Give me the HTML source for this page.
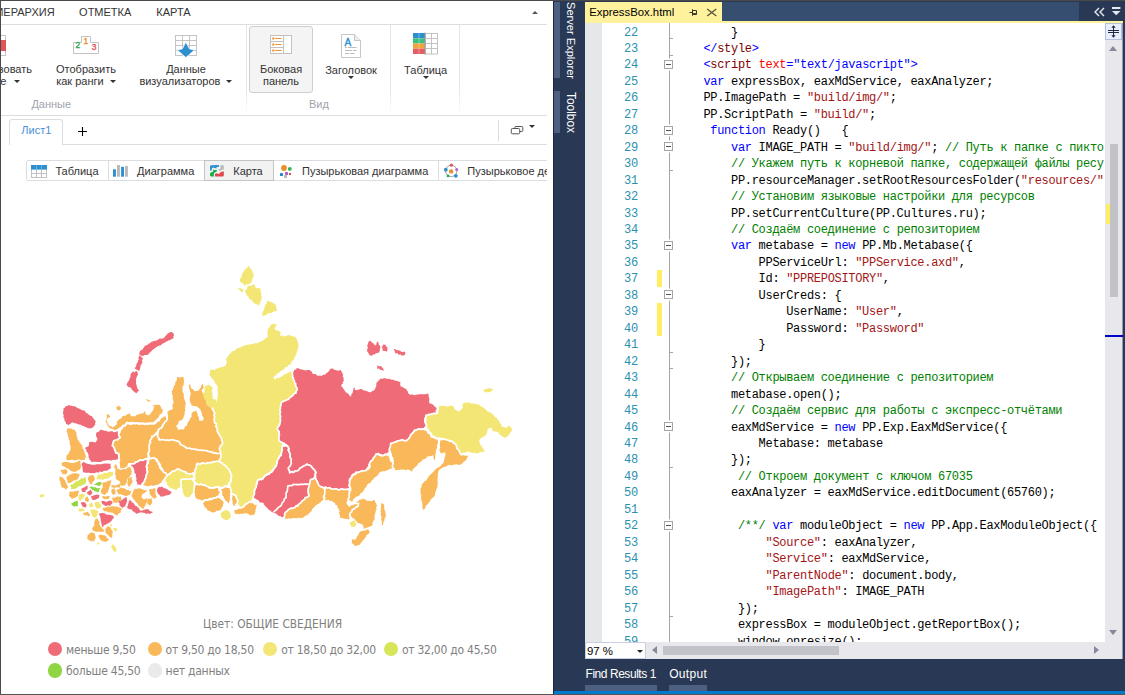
<!DOCTYPE html>
<html lang="ru"><head><meta charset="utf-8"><title>ExpressBox</title><style>
*{box-sizing:border-box;margin:0;padding:0}
html,body{width:1125px;height:695px;overflow:hidden;background:#fff}
body{position:relative;font-family:"Liberation Sans",sans-serif;font-size:11px;color:#333}
.abs{position:absolute}
#left{position:absolute;left:0;top:0;width:553px;height:695px;background:#fff;overflow:hidden}
#lb{position:absolute;left:0;top:0;width:1px;height:695px;background:#4a4a4a}
#topb{position:absolute;left:0;top:0;width:1125px;height:1px;background:#4a4a4a;z-index:20}
#botb{position:absolute;left:0;top:694px;width:1125px;height:1px;background:#555;z-index:20}
#clip{position:absolute;left:1px;top:1px;width:546px;height:692px;overflow:hidden}
.t{position:absolute;white-space:nowrap;line-height:12px;color:#333}
.hl{position:absolute;height:1px;background:#dcdde0}
.vsep{position:absolute;width:1px;top:24px;height:90px;background:linear-gradient(#e4e4e6 0%,#e4e4e6 70%,#fff 100%)}
.arr{position:absolute;width:0;height:0;border-left:3px solid transparent;border-right:3px solid transparent;border-top:3px solid #333}
.grp{color:#a0a3ad}
/* VS */
#vs{position:absolute;left:553px;top:0;width:572px;height:695px;background:#293955;overflow:hidden}
.vt{position:absolute;white-space:nowrap;color:#fff;font-size:11.2px;line-height:14px}
#ed{position:absolute;left:32px;top:23px;width:520px;height:619px;background:#fff;overflow:hidden}
.ln{position:absolute;left:0;width:52.8px;text-align:right;color:#2b91af}
pre,.ln{font-family:"Liberation Mono",monospace;font-size:12px;letter-spacing:-0.3px;line-height:16.46px;height:16.46px}
pre{position:absolute;left:118.4px;color:#000;white-space:pre}
.k{color:#0000ff}.s{color:#a31515}.c{color:#008000}.a{color:#ff0000}.m{color:#800000}
.cb{position:absolute;left:79px;width:9px;height:9px;border:1px solid #a5a5a5;background:#fff;box-shadow:0 -1.5px 0 #fff,0 1.5px 0 #fff}
.cb:after{content:"";position:absolute;left:1px;top:3px;width:5px;height:1px;background:#555}
.tick{position:absolute;left:85px;width:3px;height:1px;background:#a5a5a5}
.ym{position:absolute;left:72px;width:5px;background:#ffee62}
.lg{position:absolute;white-space:nowrap;font-family:"DejaVu Sans Condensed","DejaVu Sans",sans-serif;font-size:12px;letter-spacing:-0.25px;color:#808080;line-height:14px}
.dot{position:absolute;width:14.4px;height:14.4px;border-radius:50%}
</style></head><body>
<div id="left"><div id="clip" style="left:0;top:0;width:547px;height:695px">
<!-- ribbon tabs -->
<div class="t" style="left:-4.6px;top:6px">ИЕРАРХИЯ</div>
<div class="t" style="left:79.1px;top:6px">ОТМЕТКА</div>
<div class="t" style="left:156.3px;top:6px">КАРТА</div>
<div class="arr" style="left:532px;top:11px;border-top:none;border-bottom:3px solid #555"></div>
<div class="hl" style="left:0;top:24px;width:547px"></div>
<!-- group 1 : Данные -->
<svg class="abs" style="left:0;top:34px" width="8" height="24" viewBox="0 0 8 24"><rect x="-3.5" y="1.5" width="9" height="20" fill="#fff" stroke="#c6c6c6"/><rect x="-3" y="6" width="9" height="11" fill="#e35256"/></svg>
<div class="t" style="right:515px;top:63.4px">Преобразовать</div><div class="t" style="right:540.5px;top:75.4px">данные</div>
<div class="arr" style="left:13.5px;top:80px"></div>
<svg class="abs" style="left:72px;top:35px" width="28" height="20" viewBox="0 0 28 20"><path d="M1.5 18.5V7.5H9.5V1.5H18.5V7.5H26.5V18.5Z" fill="#fff" stroke="#c2c2c2"/><text x="3.5" y="13" font-family="Liberation Sans,sans-serif" font-size="8.4" fill="#2fa84f" stroke="#2fa84f" stroke-width="0.35">2</text><text x="11.4" y="9" font-family="Liberation Sans,sans-serif" font-size="8.4" fill="#e8902a" stroke="#e8902a" stroke-width="0.35">1</text><text x="19.8" y="15" font-family="Liberation Sans,sans-serif" font-size="8.4" fill="#e2545a" stroke="#e2545a" stroke-width="0.35">3</text></svg>
<div class="t" style="left:26px;top:63.4px;width:120px;text-align:center;line-height:12px">Отобразить<br>как ранги&nbsp;&nbsp;&nbsp;&nbsp;</div>
<div class="arr" style="left:109.5px;top:80px"></div>
<svg class="abs" style="left:174px;top:34px" width="24" height="25" viewBox="0 0 24 25"><g fill="none" stroke="#c4c4c4"><rect x="1.5" y="1.5" width="21" height="20"/><path d="M8.5 1.5V21.5M15.5 1.5V21.5M1.5 6.5H22.5M1.5 11.5H22.5M1.5 16.5H22.5"/></g><path d="M11.9 8L15.4 14.8L20.6 16L11.9 23.6L3.2 16L8.4 14.8Z" fill="#2b8fd0" stroke="#fff" stroke-width="0.8"/></svg>
<div class="t" style="left:126px;top:63.4px;width:120px;text-align:center;line-height:12px">Данные<br>визуализаторов&nbsp;&nbsp;&nbsp;&nbsp;</div>
<div class="arr" style="left:226px;top:80px"></div>
<div class="t grp" style="left:31.4px;top:98.4px">Данные</div>
<div class="vsep" style="left:246px"></div>
<!-- group 2 : Вид -->
<div class="abs" style="left:249px;top:26px;width:64px;height:67px;border:1px solid #cfcfcf;border-radius:3px;background:#f4f4f4"></div>
<svg class="abs" style="left:269px;top:34px" width="24" height="21" viewBox="0 0 24 21"><rect x="1.5" y="1.5" width="21" height="18" fill="#fff" stroke="#c2c2c2"/><path d="M14.5 1.5V19.5M1.5 7.5H14.5M1.5 13.5H14.5" stroke="#c2c2c2" fill="none"/><g fill="#e8902a"><rect x="3.3" y="3.5" width="2" height="2"/><rect x="6.2" y="4" width="6.3" height="1"/><rect x="3.3" y="9.5" width="2" height="2"/><rect x="6.2" y="10" width="6.3" height="1"/><rect x="3.3" y="15.5" width="2" height="2"/><rect x="6.2" y="16" width="6.3" height="1"/></g></svg>
<div class="t" style="left:221px;top:63.4px;width:120px;text-align:center;line-height:12px">Боковая<br>панель</div>
<svg class="abs" style="left:340px;top:33px" width="22" height="26" viewBox="0 0 22 26"><path d="M1.5 1.5H14.5L20.5 7.5V24.5H1.5Z" fill="#fff" stroke="#c6c6c6"/><path d="M14.5 1.5V7.5H20.5" fill="#eee" stroke="#c6c6c6"/><text x="4.6" y="12.8" font-family="Liberation Sans,sans-serif" font-size="10" fill="#2b8fd0" stroke="#2b8fd0" stroke-width="0.4">A</text><path d="M5 14.5H7M8 14.5H16.5M5 17.5H12M13 17.5H16.5M5 20.5H9M10 20.5H14.5" stroke="#bdbdbd"/></svg>
<div class="t" style="left:325.2px;top:64.4px">Заголовок</div>
<div class="arr" style="left:348px;top:76.4px"></div>
<div class="t grp" style="left:309px;top:98.4px">Вид</div>
<div class="vsep" style="left:390px"></div>
<!-- group 3 -->
<svg class="abs" style="left:412px;top:32px" width="27" height="23" viewBox="0 0 27 23"><rect x="13.5" y="1.5" width="12" height="20.5" fill="#fff" stroke="#c2c2c2"/><path d="M19.5 1.5V22M13.5 6.5H25.5M13.5 11.5H25.5M13.5 16.5H25.5" stroke="#c2c2c2" fill="none"/><rect x="1" y="1" width="12" height="5.3" fill="#2b8fd0"/><rect x="1" y="6.3" width="12" height="5.2" fill="#3fbf7f"/><rect x="1" y="11.5" width="12" height="5.2" fill="#f0a23c"/><rect x="1" y="16.7" width="12" height="5.3" fill="#e85d64"/><path d="M7 1V22" stroke="#fff" stroke-opacity=".35"/><path d="M13 0.5V22.5" stroke="#9a9a9a"/></svg>
<div class="t" style="left:404.1px;top:64.4px">Таблица</div>
<div class="arr" style="left:422.5px;top:76.4px"></div>
<div class="vsep" style="left:459px"></div>
<div class="hl" style="left:0;top:115px;width:547px"></div>
<!-- sheet tabs -->
<div class="hl" style="left:9px;top:144px;width:538px"></div>
<div class="abs" style="left:9px;top:119px;width:54px;height:26px;border:1px solid #dcdde0;border-bottom:none;border-radius:3px 3px 0 0;background:#fff"></div>
<div class="t" style="left:21.3px;top:124.2px;color:#4a8fd6">Лист1</div>
<svg class="abs" style="left:77px;top:126px" width="11" height="11" viewBox="0 0 11 11"><path d="M5.5 1V10M1 5.5H10" stroke="#000" stroke-width="1.1"/></svg>
<div class="abs" style="left:498px;top:120px;width:1px;height:21px;background:#dcdde0"></div>
<svg class="abs" style="left:510px;top:125px" width="14" height="10" viewBox="0 0 14 10"><rect x="4.8" y="1.5" width="8" height="5" rx="1" fill="#fff" stroke="#555"/><rect x="1.3" y="3.5" width="8.4" height="5.3" rx="1" fill="#fff" stroke="#555"/></svg>
<div class="arr" style="left:529px;top:125px"></div>
<!-- viz toolbar -->
<div class="abs" style="left:26px;top:160px;width:540px;height:21px;border:1px solid #dcdde0;border-radius:2px"></div>
<div class="abs" style="left:108px;top:161px;width:1px;height:19px;background:#dcdde0"></div>
<div class="abs" style="left:204px;top:160px;width:70px;height:21px;border:1px solid #c4c4c4;background:#f2f2f2"></div>
<div class="abs" style="left:438px;top:161px;width:1px;height:19px;background:#dcdde0"></div>
<svg class="abs" style="left:30px;top:164px" width="18" height="14" viewBox="0 0 18 14"><rect x="1.5" y="1.5" width="15" height="12" fill="#fff" stroke="#c2c2c2"/><path d="M1.5 9.5H16.5M6.5 5V13.5M11.5 5V13.5" stroke="#c2c2c2" fill="none"/><rect x="1" y="1" width="16" height="4.6" fill="#2b8fd0"/><path d="M6.5 1V5.6M11.5 1V5.6" stroke="#fff" stroke-opacity=".3"/></svg>
<div class="t" style="left:55.4px;top:165.2px">Таблица</div>
<svg class="abs" style="left:112px;top:164px" width="17" height="14" viewBox="0 0 17 14"><rect x="1" y="5.3" width="2.9" height="7.4" fill="#2b8fd0"/><rect x="5" y="1" width="2.9" height="11.7" fill="#b9b9b9"/><rect x="9.1" y="2.8" width="2.9" height="9.9" fill="#2b8fd0"/><rect x="13" y="2" width="2.9" height="10.7" fill="#b9b9b9"/></svg>
<div class="t" style="left:137.1px;top:165.2px">Диаграмма</div>
<svg class="abs" style="left:209px;top:164px" width="16" height="14" viewBox="0 0 16 14"><path d="M1 2.4Q1 1.2 2.2 1.2L9.9 1.1L10.2 2.8L7.7 3.1L7.5 4.5L5.4 4.1L4 3.6L2.9 4.5L2.75 6.4L1.2 6.8Z" fill="#2b8fd0"/><path d="M11.1 1.2H14.8V5.5L12.7 5.65L11.8 6.8L10.2 6.4L9.2 5.5L10.5 4.9L11.8 3.9L11.6 2.3Z" fill="#b9b9b9"/><path d="M4.5 5.2L5.4 6.1H7.7L8 7.2L6.7 7.9L5.4 8.7L4.8 10.2L5.1 12.5H2.3Q1.1 12.5 1 11.3V9.3L2.3 8.3L3.9 7.7L4.2 6.4Z" fill="#19b04b"/><path d="M14.8 7.4V11.6Q14.6 12.6 13.7 12.6H6.1L5.9 10.2L7 9.3L8.3 9.6L9.9 9.9L11.1 8.7L13 7.55Z" fill="#e2474c"/></svg>
<div class="t" style="left:233.3px;top:165.2px">Карта</div>
<svg class="abs" style="left:279px;top:164px" width="14" height="15" viewBox="0 0 14 15"><circle cx="5" cy="4" r="2.9" fill="#e8902a"/><circle cx="10.8" cy="4.9" r="1.9" fill="#33b15a"/><rect x="1" y="9" width="3" height="3" rx=".4" fill="#1e86d0"/><rect x="6" y="8" width="3" height="3" rx=".4" fill="#b05cc4"/><rect x="10" y="9" width="2" height="2" fill="#e2474c"/><rect x="5" y="11" width="3" height="3" rx=".4" fill="#b9b9b9"/></svg>
<div class="t" style="left:302px;top:165.2px">Пузырьковая диаграмма</div>
<svg class="abs" style="left:443px;top:163px" width="16" height="16" viewBox="0 0 16 16"><circle cx="8.2" cy="7.9" r="5.7" fill="none" stroke="#8c8c8c" stroke-width=".8"/><circle cx="8.4" cy="2.2" r="1.6" fill="#e5545b"/><circle cx="2.8" cy="6.7" r="1.9" fill="#2b8fd0"/><circle cx="13.7" cy="6.5" r="1.5" fill="#b75fc7"/><circle cx="5" cy="12.9" r="1.4" fill="#19b04b"/><circle cx="12.8" cy="12.8" r="1.9" fill="#2b8fd0"/><circle cx="8.1" cy="8.4" r="2.2" fill="#e8902a"/></svg>
<div class="t" style="left:467.3px;top:165.2px">Пузырьковое дерево</div>
<svg class="abs" style="left:0;top:240px" width="547" height="340" viewBox="0 240 547 340"><g stroke="#fff" stroke-width="1.70" stroke-linejoin="round">
<path fill="#f3e675" d="M273.3 322.4L272.6 323.1L271.5 323.4L270.5 324.3L269.4 325.5L269.3 326.0L269.0 326.4L268.1 327.6L267.1 328.3L267.2 329.9L266.4 331.2L266.2 331.7L266.4 332.5L266.7 334.2L266.8 335.4L266.9 336.8L266.0 337.0L265.6 337.2L264.7 337.9L263.5 338.8L262.1 340.1L261.9 339.7L260.6 340.4L259.9 340.8L258.8 341.4L257.6 342.4L256.6 342.0L256.1 342.1L253.9 342.4L253.1 343.3L252.6 343.5L251.4 342.9L250.2 343.6L248.8 343.7L247.9 343.9L247.0 343.8L246.2 344.2L244.6 344.3L243.7 345.1L242.4 344.9L241.5 345.6L240.9 346.6L240.2 346.6L239.8 346.6L238.5 347.2L237.0 347.4L236.0 348.2L235.4 348.5L234.7 349.0L234.2 350.2L232.7 350.1L231.8 350.7L231.0 351.5L230.1 352.6L229.4 353.0L228.6 353.6L228.1 354.5L227.2 355.7L227.3 356.0L226.7 356.8L225.8 357.5L225.3 358.3L225.3 360.0L225.9 361.5L225.7 362.9L225.3 363.7L225.0 365.0L224.1 365.3L223.1 366.0L222.1 366.2L221.0 366.0L219.8 366.9L219.3 366.8L218.2 367.2L216.8 367.8L215.5 368.3L214.6 368.8L214.3 368.6L212.5 369.0L211.4 368.8L210.3 368.9L209.4 369.4L209.0 371.2L209.2 372.4L209.3 372.8L208.9 373.6L208.1 374.7L208.7 375.7L209.7 376.3L210.3 377.4L210.4 378.8L211.8 379.5L213.0 380.3L212.9 381.1L213.7 381.6L214.3 383.0L214.6 384.3L215.3 384.7L216.1 385.4L216.4 386.2L216.9 387.1L216.8 389.0L216.7 390.0L216.8 390.7L216.9 392.3L216.9 393.4L217.0 393.9L216.9 395.3L216.8 396.8L216.6 397.7L216.5 398.9L215.9 399.7L216.1 400.7L215.5 402.0L214.8 403.1L214.7 403.6L214.5 404.5L213.8 406.2L212.7 407.2L213.0 407.6L212.6 409.3L213.0 410.1L213.1 411.0L213.1 412.2L213.0 413.1L212.3 413.8L212.9 414.9L213.4 415.9L213.3 417.0L213.0 418.3L213.0 419.4L213.6 419.9L214.0 420.8L213.8 422.3L214.8 423.8L215.7 424.8L215.6 425.7L215.1 426.8L215.8 427.1L215.4 428.0L215.8 429.3L216.5 430.3L216.6 431.3L216.8 431.7L217.0 432.5L218.0 433.9L218.9 434.9L219.2 436.1L219.2 437.3L220.2 438.1L220.7 439.6L220.6 440.2L221.4 440.9L221.5 442.9L221.4 443.7L220.8 444.9L220.1 445.7L219.6 446.8L218.8 448.0L219.2 449.2L219.1 449.4L220.1 451.1L220.3 452.5L219.8 453.2L219.6 454.2L220.2 455.7L220.1 457.3L220.0 457.8L219.6 458.4L219.3 459.6L218.1 461.1L218.3 462.2L218.8 463.0L219.1 464.3L219.4 465.4L219.6 466.8L220.8 467.4L221.6 467.6L222.4 467.9L223.4 468.3L224.0 469.2L225.6 469.2L226.6 470.3L227.3 471.5L227.9 472.1L227.8 473.2L228.9 473.5L229.8 474.0L229.4 475.4L229.3 477.1L230.6 478.3L229.9 478.6L231.2 479.8L230.7 481.2L230.4 482.1L229.7 483.1L229.4 484.0L229.7 484.6L229.6 485.5L229.7 487.1L230.0 488.4L230.0 488.8L230.5 489.8L231.2 490.9L231.3 491.9L231.6 493.6L232.9 494.1L234.3 495.3L235.3 495.9L235.5 496.3L235.6 497.1L235.7 498.4L235.5 499.6L235.8 501.0L236.6 502.4L237.3 503.3L237.2 504.7L237.8 504.5L238.1 505.8L238.8 506.6L239.8 507.5L239.8 508.0L240.5 508.3L241.2 507.7L242.6 507.7L243.6 506.7L244.5 505.9L244.9 505.1L245.7 504.4L246.8 504.1L247.5 503.4L248.3 503.0L249.1 502.4L249.9 501.7L251.3 500.9L252.2 500.3L252.8 499.0L253.7 498.6L253.3 497.3L253.4 496.3L253.9 495.4L254.7 494.1L254.9 492.8L254.0 491.6L254.7 490.7L255.2 489.9L255.2 489.0L255.5 488.4L256.6 487.0L256.6 486.1L256.3 485.1L257.3 483.6L257.1 482.3L257.5 481.1L258.0 479.8L258.6 479.6L258.9 479.7L260.2 478.9L261.3 479.2L262.2 479.0L262.7 478.2L264.0 476.6L264.5 475.9L265.4 475.3L266.7 474.5L267.0 474.1L268.5 473.7L269.4 472.8L270.8 472.2L271.7 472.0L271.8 470.9L272.7 470.6L273.0 469.8L273.4 468.9L274.5 467.9L274.7 467.2L275.4 466.5L276.3 465.5L276.4 464.2L276.9 463.4L276.9 462.4L277.1 461.4L277.6 460.1L278.1 458.7L278.3 458.2L278.7 457.7L279.7 455.8L280.8 455.4L281.0 454.4L281.2 453.3L282.1 452.4L281.8 451.5L282.5 450.5L282.5 449.0L282.7 448.0L283.1 447.0L283.5 445.8L283.1 444.7L282.8 444.1L283.2 443.1L282.6 442.3L281.3 441.5L280.2 441.0L279.9 439.9L280.0 438.6L280.0 437.4L280.0 436.1L280.8 434.8L280.7 433.6L280.2 432.8L278.9 432.6L279.0 431.0L279.1 430.3L278.7 429.4L278.4 428.2L278.8 427.0L280.2 426.2L280.5 425.1L281.0 424.7L281.1 423.7L280.6 422.6L281.5 421.7L281.5 420.2L281.8 419.6L282.0 418.0L282.4 416.9L282.9 416.2L282.4 415.4L281.3 413.6L281.4 412.7L281.5 412.0L281.2 410.8L280.8 409.7L280.6 409.2L281.3 408.1L281.6 407.1L281.7 405.7L282.5 405.1L282.5 403.3L283.9 403.0L284.7 402.1L286.1 402.1L286.3 401.6L287.6 400.6L288.6 400.4L289.5 400.2L290.0 399.3L291.1 398.1L291.5 398.1L292.8 397.6L293.7 396.4L294.5 395.4L295.1 394.5L295.8 393.7L296.2 393.5L296.6 392.5L296.9 391.8L297.9 390.9L298.5 390.5L298.4 389.0L298.4 388.3L297.5 387.3L296.8 385.9L296.8 384.5L296.0 384.5L295.7 383.7L295.4 382.3L295.7 380.5L295.4 379.2L294.4 378.8L294.5 378.0L293.9 377.2L293.6 375.4L293.3 375.1L293.5 374.3L293.6 373.0L293.6 371.8L293.5 370.6L293.4 369.9L292.5 370.5L291.0 370.7L289.5 370.8L288.9 371.4L287.2 371.9L286.5 372.8L285.9 373.1L284.8 373.1L283.8 373.9L282.4 375.0L281.5 375.2L281.2 376.1L279.5 375.9L279.1 377.0L278.3 377.4L277.3 377.0L275.8 377.4L274.8 378.6L274.4 377.4L275.2 376.3L276.4 376.4L277.1 375.5L277.6 374.5L279.0 373.7L279.6 373.3L280.6 372.5L281.3 371.8L282.5 371.0L283.4 370.6L284.3 370.3L284.9 369.4L285.7 367.9L286.6 367.8L287.6 367.7L288.5 366.7L288.5 366.0L289.5 365.6L290.5 365.5L291.3 364.7L292.2 363.1L292.1 362.7L292.9 361.3L294.0 360.7L294.9 359.6L295.0 358.6L295.4 357.6L296.3 355.9L296.8 355.6L297.0 354.4L297.5 352.9L297.8 352.2L298.1 351.3L298.3 350.2L298.5 349.3L299.1 347.9L299.4 347.1L299.4 346.1L299.1 345.0L299.1 343.9L299.4 342.9L299.0 342.5L297.9 340.5L298.6 339.6L297.2 338.3L296.8 337.7L296.3 336.9L295.5 336.3L294.0 335.6L293.0 335.3L292.0 335.3L290.9 334.9L290.1 334.0L289.2 334.0L288.2 334.4L286.7 334.6L285.5 335.1L284.6 335.5L284.0 335.7L283.5 334.9L282.3 334.4L280.9 335.0L281.2 334.1L281.6 332.4L281.1 331.6L281.1 330.2L280.2 330.6L279.2 330.2L279.0 330.0L277.4 329.7L276.3 329.5L275.4 328.1L276.5 327.3L276.6 326.8L277.1 325.8L277.8 324.3L276.9 323.7L275.6 323.5L274.7 323.3L274.4 322.5Z"/>
<path fill="#ef6b77" d="M292.8 370.1L293.1 370.5L292.7 371.6L292.2 372.6L292.5 374.2L292.6 375.3L292.5 376.1L292.7 377.4L293.5 377.9L293.3 379.4L293.8 380.1L294.4 380.6L294.5 381.9L294.9 383.5L295.9 384.0L295.4 384.9L295.5 385.6L296.1 386.5L296.9 388.0L297.0 388.9L297.4 389.3L296.5 390.8L295.9 391.8L296.0 393.1L294.9 393.2L293.7 393.9L293.6 394.4L292.9 395.5L291.4 396.4L290.8 397.0L290.3 397.3L289.2 398.2L288.8 398.9L287.7 399.7L286.3 400.0L285.4 400.6L285.0 400.8L284.0 401.1L282.8 401.8L281.3 402.5L281.0 403.8L281.1 405.3L280.6 405.7L280.3 407.0L280.5 408.5L280.0 409.7L279.9 410.5L280.3 411.1L280.5 412.1L280.1 413.2L279.8 413.4L280.3 415.6L280.8 416.4L280.4 416.8L280.2 418.3L280.4 419.5L280.5 420.6L280.3 421.6L280.1 422.7L279.8 424.1L279.5 424.9L279.0 426.1L278.0 426.7L277.5 428.0L277.2 428.8L278.0 430.1L278.2 431.0L279.2 431.5L279.0 433.2L279.1 433.8L279.5 434.6L279.1 435.9L279.0 437.1L278.9 438.3L279.0 439.5L278.9 440.0L279.9 441.2L280.0 441.5L281.3 442.1L282.6 442.6L283.3 443.1L284.6 443.5L284.9 444.6L286.0 444.8L286.6 445.1L287.7 446.3L288.3 446.9L288.8 448.8L288.3 449.8L288.6 450.7L289.3 451.9L289.1 452.7L290.1 453.5L290.1 454.9L289.9 455.9L289.9 457.0L290.5 458.2L291.0 458.9L291.4 459.7L290.9 460.2L291.0 461.7L290.8 462.9L290.4 463.7L290.4 464.9L289.5 465.8L288.7 466.8L288.2 467.8L288.1 468.7L289.0 470.1L289.6 471.2L289.7 471.6L289.6 473.1L290.6 472.6L292.3 471.7L292.8 472.5L294.1 472.1L294.7 471.5L295.3 470.9L296.8 470.8L298.2 470.6L298.5 470.2L299.4 469.4L299.8 468.4L300.6 468.0L301.9 467.2L303.1 466.5L303.9 465.9L304.9 465.8L306.4 465.2L306.8 464.2L307.4 464.9L309.0 465.2L310.0 465.5L311.4 466.4L311.8 467.6L312.3 468.0L313.3 469.0L314.2 469.7L314.9 470.8L315.2 471.7L315.9 472.3L315.0 474.4L315.7 475.8L315.0 476.8L315.3 478.0L315.3 478.1L315.7 479.4L316.0 480.8L316.5 481.5L316.9 482.4L317.4 483.6L318.0 484.4L318.4 485.5L319.8 486.4L320.9 486.9L321.7 487.6L322.3 487.1L323.9 488.0L325.1 488.0L325.9 488.4L326.8 488.6L328.0 488.8L329.2 489.4L330.3 489.5L331.2 489.7L332.2 490.1L333.0 490.3L333.8 490.4L334.4 490.0L336.0 489.9L337.0 490.2L338.1 490.5L339.2 490.5L340.0 490.0L340.8 489.4L342.5 489.3L342.6 490.1L344.0 490.0L345.1 490.2L346.2 490.2L346.9 489.8L348.2 489.5L349.5 488.5L350.0 486.9L350.0 486.3L350.5 485.1L350.4 484.2L350.3 482.8L350.1 481.5L349.6 480.9L349.5 479.8L350.3 478.5L351.2 477.9L351.4 476.9L351.7 476.0L352.4 474.9L353.5 474.1L354.5 473.8L355.8 473.0L355.8 472.4L356.4 472.3L357.5 472.5L358.7 472.3L359.7 472.3L361.4 471.7L362.0 471.1L362.9 471.1L364.0 471.0L365.3 470.7L366.4 470.3L366.7 469.6L367.3 468.5L367.8 467.7L368.7 466.6L369.3 465.8L369.0 464.7L369.7 463.7L370.4 462.6L371.1 461.4L371.8 460.9L373.1 459.2L373.4 458.4L374.4 457.5L375.2 456.5L376.1 455.3L376.3 454.6L376.9 454.1L378.5 453.6L378.8 454.0L379.7 454.6L381.1 454.8L381.9 455.1L382.7 456.0L384.4 455.0L384.9 454.3L386.0 454.5L387.4 454.1L387.6 453.4L388.5 453.3L389.8 452.1L389.5 451.4L390.0 450.4L390.1 449.5L390.3 448.4L391.2 447.2L390.8 446.9L391.7 445.7L392.4 444.6L392.7 443.6L393.4 443.6L394.9 442.6L395.6 442.5L396.6 441.8L397.4 441.0L398.2 441.2L399.9 440.6L400.8 440.3L402.2 440.2L402.8 440.2L404.5 440.9L405.2 441.1L405.8 440.7L406.8 440.3L408.0 440.4L409.0 439.6L409.4 438.8L409.5 437.8L410.7 436.9L411.1 435.7L411.4 434.7L412.3 433.9L412.5 432.9L413.3 432.5L414.1 431.1L414.2 430.3L415.5 430.4L416.7 429.7L417.9 429.3L419.1 429.0L420.8 429.4L421.4 429.7L422.6 428.8L423.8 429.5L424.6 429.4L424.6 427.7L425.5 427.4L426.0 426.3L426.6 424.5L425.7 423.5L425.2 422.8L424.9 422.1L424.8 421.2L425.0 419.5L425.0 418.5L425.5 417.8L425.9 416.5L426.5 415.9L427.1 415.8L428.1 415.1L429.0 414.9L430.1 414.5L431.5 414.3L432.5 413.9L433.7 413.8L433.9 413.4L435.4 414.0L436.8 413.5L436.6 412.2L436.3 410.9L436.9 410.1L437.5 408.8L437.4 407.3L437.3 407.5L435.9 406.3L435.0 405.7L434.6 404.9L433.5 404.2L432.9 403.5L432.2 403.1L430.8 402.6L430.0 402.4L430.0 400.6L430.2 399.2L430.1 398.2L429.5 396.7L429.7 395.5L429.3 395.0L429.2 394.0L429.0 392.6L427.0 392.7L426.1 393.2L425.3 393.3L423.9 393.3L422.6 393.5L421.8 393.4L421.1 393.0L420.6 393.2L418.7 393.7L417.6 393.6L417.1 393.5L415.9 393.9L414.1 394.3L412.8 393.8L412.0 393.0L411.6 393.3L410.6 393.9L409.4 393.3L408.9 392.5L408.7 391.2L407.3 389.7L407.2 389.1L406.8 388.2L405.6 387.7L404.4 387.4L403.6 386.6L402.5 386.1L401.4 385.8L401.0 384.3L401.3 383.3L401.1 382.3L402.0 381.9L401.4 380.9L399.5 381.0L398.2 380.5L397.2 380.0L396.0 380.0L395.2 379.7L394.5 379.2L393.5 378.7L392.1 378.9L391.0 378.7L390.4 377.8L388.9 378.0L388.3 378.2L387.2 378.0L386.1 377.4L385.1 377.4L383.9 377.1L382.5 377.9L382.1 377.7L381.3 377.9L380.4 377.8L379.4 378.2L378.6 379.5L377.8 380.0L377.5 380.5L376.5 381.7L375.4 382.2L375.6 383.4L375.4 384.4L375.5 385.4L375.3 386.5L374.5 387.4L374.3 388.8L373.5 389.6L372.1 390.2L371.4 390.4L371.3 390.9L370.1 391.5L368.9 391.2L368.0 390.9L367.8 390.5L365.9 389.9L364.7 389.8L363.7 389.5L362.8 388.9L362.4 388.4L361.2 387.8L360.5 388.1L359.6 388.4L358.0 388.9L356.7 389.3L355.7 389.1L355.3 387.1L354.3 386.5L353.4 385.9L353.5 386.5L353.5 387.2L352.6 388.1L352.4 389.9L352.2 390.7L351.9 392.0L351.7 392.8L350.7 393.3L350.4 393.9L350.5 395.5L349.9 394.4L348.9 393.3L348.4 393.0L347.6 392.1L346.4 391.6L346.0 390.8L345.3 390.1L343.9 388.1L343.7 387.8L343.2 386.6L342.1 385.8L342.5 384.7L343.9 384.2L343.6 382.9L343.7 382.3L344.3 381.4L344.9 380.4L344.3 379.4L344.6 378.2L344.1 376.9L343.6 376.0L343.9 375.1L344.2 374.2L343.3 373.3L343.1 372.2L342.5 371.4L342.0 370.9L341.3 369.3L340.2 368.9L339.4 369.2L338.6 369.8L336.5 369.3L335.7 369.1L334.8 369.1L333.9 368.2L333.1 367.6L332.2 367.7L331.1 367.8L330.1 367.6L329.1 369.1L328.9 369.8L327.5 371.4L327.0 371.8L326.3 372.1L325.5 372.8L324.8 373.7L323.9 374.0L322.7 373.9L321.3 375.1L320.5 374.5L319.6 374.5L318.7 375.0L317.5 374.8L316.6 373.8L315.6 373.1L314.1 373.2L313.5 373.2L312.8 372.3L312.2 370.7L311.3 370.4L310.2 369.2L309.7 369.1L308.7 369.1L307.7 369.0L306.0 369.6L305.0 369.1L304.6 369.5L303.6 369.1L302.3 368.7L300.6 368.3L299.4 368.0L298.9 367.8L297.8 367.1L297.0 367.3L296.0 367.7L295.3 369.0L294.2 368.7L293.5 369.3Z"/>
<path fill="#ef6b77" d="M282.8 445.1L282.1 446.0L282.2 447.0L282.1 448.5L282.3 450.3L281.7 451.2L281.8 452.1L281.5 453.1L280.9 453.8L281.3 455.4L280.5 455.7L279.4 456.8L278.9 458.1L278.5 458.6L278.2 459.2L277.2 460.7L277.3 462.0L277.2 462.7L276.8 463.9L276.5 464.9L276.3 466.2L274.9 467.1L275.0 467.8L274.0 468.9L273.3 469.7L273.0 470.7L272.0 471.1L271.8 472.1L271.0 472.2L269.9 472.9L269.3 474.1L267.4 474.3L267.1 474.8L266.1 475.4L264.7 476.0L264.4 476.8L263.4 477.9L262.7 479.1L261.8 479.6L260.6 479.2L259.3 479.8L258.6 479.8L258.0 480.1L257.5 481.2L257.1 482.3L257.4 483.5L256.2 484.9L256.4 486.0L256.4 486.8L255.6 488.1L255.1 489.1L255.1 489.6L254.8 490.5L253.8 491.4L254.6 492.6L254.5 493.9L253.9 495.2L253.4 496.2L253.2 497.1L253.6 498.7L254.9 499.2L255.3 499.9L255.9 500.0L257.0 500.6L258.2 501.1L258.6 502.7L259.9 503.3L261.1 503.4L261.7 503.3L262.9 503.8L262.8 504.8L264.0 505.7L264.5 506.6L265.0 507.1L266.0 508.2L267.1 509.0L267.9 510.2L269.0 510.9L269.5 511.1L270.0 511.3L270.6 512.2L271.9 513.0L272.9 513.2L273.5 513.4L275.0 514.4L276.3 514.6L276.7 515.1L277.5 516.4L278.7 516.6L279.9 517.3L280.5 517.1L281.4 517.8L282.4 518.6L283.3 518.4L283.9 518.0L284.5 516.9L285.0 515.4L284.9 514.5L284.9 513.7L286.2 512.9L286.5 512.3L287.4 511.5L288.1 510.4L288.9 509.5L290.3 509.5L291.1 508.8L292.1 508.8L293.3 508.5L294.2 508.2L294.6 508.2L296.0 506.5L296.7 506.1L298.1 506.1L298.4 505.0L299.7 504.1L301.0 503.2L301.5 502.1L302.2 502.0L302.7 501.3L304.0 500.4L304.7 499.6L305.6 498.6L305.4 497.6L306.8 497.6L308.2 497.1L309.1 496.2L309.2 495.3L309.0 494.0L309.3 493.2L308.5 491.5L308.7 490.5L308.9 490.3L309.3 489.4L309.7 487.9L309.3 486.8L310.0 486.8L310.5 485.0L310.6 483.7L311.0 482.8L311.5 481.8L311.7 481.0L312.5 480.1L313.7 479.4L314.2 478.8L314.4 478.2L314.4 477.5L314.7 476.5L315.4 475.4L314.9 474.1L316.0 472.2L315.3 471.7L314.9 470.9L314.4 469.9L313.4 469.1L312.5 468.2L311.9 467.5L311.6 466.6L310.1 465.5L309.0 465.1L307.4 464.7L306.9 463.9L306.3 464.8L305.2 465.4L304.2 465.7L303.4 465.9L302.8 466.7L301.7 467.3L300.4 468.0L299.7 468.4L299.3 469.5L298.4 470.2L298.1 470.6L296.8 470.8L295.3 470.9L294.7 471.4L294.1 472.1L292.8 472.3L292.1 471.6L290.5 472.5L289.6 472.8L289.5 471.5L289.3 470.8L288.6 469.5L288.2 468.3L288.9 467.3L289.7 466.3L290.5 465.5L290.7 464.4L291.3 463.4L291.1 462.6L291.0 460.8L291.2 459.9L291.2 459.2L290.7 458.4L290.0 457.5L289.8 456.0L290.1 455.1L290.1 453.7L289.3 452.8L289.2 452.0L288.8 450.9L288.0 449.9L288.8 449.2L288.3 447.0L287.6 446.5L286.4 445.9L285.6 445.5L284.0 446.3L283.6 445.6Z"/>
<path fill="#f9b95b" d="M309.0 486.2L308.8 487.1L308.4 488.3L307.9 489.6L308.0 490.4L308.0 490.5L308.0 491.5L308.6 493.6L308.2 493.9L309.1 495.5L308.7 496.3L307.4 497.2L306.2 497.5L305.3 497.6L305.3 498.4L304.4 499.5L303.4 500.1L302.1 501.0L301.7 501.7L301.1 502.0L300.9 502.8L299.1 503.9L298.1 504.8L298.1 505.9L296.6 505.7L295.8 506.1L295.0 507.7L294.1 507.7L293.4 507.9L292.1 508.4L290.9 508.2L289.8 508.8L288.9 509.3L287.8 510.3L287.0 511.2L286.2 511.8L285.7 512.1L285.0 513.1L284.5 514.1L284.8 515.1L284.5 516.3L284.1 517.7L283.2 518.1L284.3 519.2L285.2 519.4L286.6 519.6L288.0 519.6L288.9 519.2L289.7 519.2L290.8 519.9L292.0 519.4L292.3 519.2L294.0 518.9L295.4 519.1L296.1 519.0L296.6 519.0L297.5 519.3L298.7 518.6L300.4 519.1L301.5 519.0L302.3 518.4L302.9 518.7L303.6 518.5L304.6 517.7L305.2 516.7L306.1 516.3L307.9 516.0L308.1 515.2L309.2 514.5L309.9 513.9L310.0 513.5L311.1 512.3L312.3 511.9L312.7 511.4L312.6 509.8L313.6 508.8L314.6 508.1L315.4 507.3L315.6 506.5L316.6 506.0L317.5 505.6L317.9 505.1L319.1 504.4L320.9 503.0L321.6 502.7L322.1 501.5L323.3 501.0L323.8 500.5L324.8 499.0L325.0 497.8L324.4 497.6L324.6 496.5L324.7 495.4L324.6 494.5L324.8 493.3L325.2 492.1L324.7 490.3L324.8 490.2L325.1 488.5L324.3 488.4L322.5 487.3L321.8 487.2L320.9 486.6L320.3 486.4L319.0 485.4L318.3 484.3L318.0 483.1L317.7 482.4L317.2 481.5L316.6 480.5L316.1 479.4L315.7 478.2L315.7 478.1L314.2 478.1L313.8 478.6L312.0 479.2L311.0 479.3L310.6 479.7L310.1 480.9L310.0 482.0L309.9 483.1L309.4 483.9L309.5 484.3Z"/>
<path fill="#f9b95b" d="M325.3 486.9L325.3 488.0L324.8 489.8L324.7 490.3L324.9 491.5L324.9 492.8L324.7 493.9L324.5 494.9L323.8 496.0L323.5 497.4L324.5 497.4L324.8 498.4L324.2 499.8L323.8 500.9L325.3 501.0L326.3 501.1L327.5 500.8L328.3 500.7L328.7 501.3L329.9 502.0L331.3 501.6L332.4 502.7L333.3 503.1L334.2 503.3L334.8 505.0L335.1 505.7L336.5 505.8L336.8 507.6L337.2 508.4L337.8 509.3L338.3 510.4L338.7 511.3L338.3 512.0L338.1 512.8L338.5 514.1L339.1 515.3L339.1 516.4L338.9 517.5L340.3 519.2L340.8 518.7L341.4 518.8L342.8 519.3L343.5 519.3L344.7 519.5L346.4 520.0L347.3 519.6L348.1 520.1L348.6 520.9L350.1 521.0L349.7 520.0L350.6 518.2L350.3 517.3L350.4 515.9L350.4 515.1L351.4 514.3L352.3 513.0L352.5 512.2L352.7 511.6L352.9 510.4L353.6 509.4L354.8 509.1L355.1 508.6L356.8 507.6L356.9 507.8L357.6 506.7L359.0 505.7L359.1 504.8L359.8 504.2L360.8 503.3L360.6 501.9L359.3 501.0L358.6 500.0L358.3 499.1L357.4 499.8L356.0 500.8L355.2 501.6L354.6 501.9L354.1 502.6L353.7 503.4L353.0 504.3L351.7 504.3L350.5 504.7L349.9 505.4L349.6 505.9L348.6 505.2L348.5 504.6L347.6 503.7L347.5 502.4L348.1 501.1L348.4 500.2L349.6 499.2L349.4 498.2L349.8 496.7L350.3 495.7L350.4 494.7L350.2 493.9L349.8 493.1L349.2 491.5L349.2 490.8L349.0 490.0L348.6 489.0L347.3 489.2L346.3 489.3L345.3 489.4L344.1 489.3L342.7 489.3L342.6 488.9L340.6 488.9L340.1 489.7L339.0 490.0L337.8 489.4L336.5 488.9L335.1 488.9L333.8 489.2L332.8 489.2L331.7 488.8L331.1 489.0L330.3 487.9L328.9 487.7L328.2 488.0L327.4 488.1L326.3 487.6Z"/>
<path fill="#f9b95b" d="M350.6 478.5L350.2 479.9L349.8 480.9L349.5 481.6L349.5 482.4L349.7 483.6L348.8 485.5L349.5 485.9L350.0 486.6L350.5 488.1L350.7 489.5L350.6 490.1L349.9 491.0L349.6 492.5L349.4 493.6L348.9 494.8L349.2 496.1L349.3 497.2L348.4 498.4L348.4 499.8L347.8 500.0L349.1 501.2L350.1 501.3L351.3 502.3L352.4 502.7L353.0 502.3L353.6 501.5L353.7 500.1L354.4 499.5L355.4 498.5L356.7 497.7L357.0 497.2L357.7 497.2L359.0 497.2L359.8 496.1L360.6 495.0L360.9 494.2L361.5 494.1L362.4 493.0L363.6 492.2L363.8 491.7L364.2 491.4L365.2 490.0L365.2 489.1L366.0 488.7L366.7 487.4L367.6 486.9L367.8 485.3L368.7 484.3L369.9 484.2L370.9 483.7L371.6 482.5L372.4 481.3L372.9 480.5L373.5 480.7L374.3 479.8L374.4 478.7L375.3 478.1L376.6 477.2L377.2 476.8L378.2 476.0L379.0 475.1L379.4 474.3L379.9 473.0L381.1 472.9L381.9 472.3L382.9 472.1L383.9 472.0L385.5 472.3L386.1 471.4L387.4 471.1L388.6 470.8L389.4 470.1L389.9 469.7L391.2 469.5L392.3 469.2L392.9 468.7L393.4 467.4L393.8 465.9L394.2 464.4L393.1 463.5L392.8 462.6L392.5 462.2L391.0 460.8L390.4 459.7L390.4 458.5L390.3 457.6L389.7 456.8L389.3 455.9L388.5 455.1L388.0 454.2L387.5 454.1L387.1 455.0L385.4 454.4L384.7 454.9L383.4 455.6L381.8 456.0L381.1 455.1L380.0 455.6L379.1 455.0L378.3 454.2L377.3 454.0L375.8 454.1L375.8 455.1L374.8 456.2L374.3 457.1L373.3 458.0L373.1 458.9L372.4 460.2L371.2 460.7L370.9 461.4L369.8 462.7L369.5 463.9L369.5 465.0L370.2 466.2L369.6 467.1L368.8 468.8L367.7 468.9L366.5 469.5L366.5 470.2L365.4 470.7L364.1 470.9L362.9 470.9L362.0 470.6L361.4 471.1L359.8 471.7L358.8 472.1L357.9 472.5L356.8 472.3L356.0 472.7L356.2 473.4L355.3 474.4L354.4 474.5L353.2 475.0L352.5 475.7L352.0 476.8L351.4 477.8Z"/>
<path fill="#f9b95b" d="M352.1 503.3L353.3 503.5L353.9 503.3L354.7 503.4L356.0 503.3L357.0 503.4L357.7 503.3L358.5 503.4L358.4 504.6L358.3 505.6L356.8 507.2L356.9 507.0L355.7 507.4L354.5 508.6L354.0 509.0L352.3 509.6L352.0 510.7L351.6 512.0L350.3 512.9L349.9 513.6L349.8 513.9L349.8 514.5L349.8 515.2L350.5 516.6L351.1 517.8L352.1 518.8L353.1 518.9L353.5 519.9L354.7 520.2L354.7 521.3L355.9 521.7L356.4 523.0L357.4 523.6L358.8 524.1L359.4 524.3L360.4 524.7L361.4 524.8L362.3 525.8L362.6 527.0L363.0 528.4L364.0 530.0L365.0 529.6L365.7 529.2L367.0 528.6L368.4 528.3L369.9 527.4L370.4 527.0L371.2 527.0L372.7 526.5L373.1 525.1L373.8 524.9L373.3 523.3L373.7 522.1L374.6 520.8L375.3 519.8L375.6 519.0L375.3 517.5L375.5 517.0L375.3 515.7L375.9 514.8L376.0 513.8L376.2 513.0L376.5 512.1L376.5 511.0L377.4 510.3L377.5 508.9L376.9 507.7L377.4 506.9L377.8 506.2L377.6 505.0L377.1 503.4L376.9 503.1L376.1 502.0L375.5 500.5L375.7 499.2L373.8 498.9L372.5 499.8L371.7 500.2L370.7 500.2L369.6 500.2L368.9 499.8L367.7 500.0L367.0 499.9L366.0 498.7L365.1 498.7L364.0 498.0L363.0 497.7L362.3 497.8L361.8 498.5L360.3 498.8L359.2 499.0L358.5 499.8L357.8 500.3L356.3 501.1L355.1 501.6L354.5 501.9L354.0 502.3L353.3 502.5L352.1 502.9Z"/>
<path fill="#f9b95b" d="M390.6 443.6L390.6 444.6L390.5 445.5L390.3 446.9L389.7 448.2L389.3 449.1L389.2 450.2L389.5 451.1L390.2 451.5L390.6 453.0L391.1 454.3L391.3 455.6L391.0 456.8L392.0 457.3L392.6 458.2L392.7 459.1L392.6 459.8L393.1 460.7L392.8 462.3L392.8 462.5L393.1 463.7L392.7 465.0L392.4 466.0L392.5 467.4L393.6 468.5L394.2 468.9L394.1 470.1L394.5 471.1L395.6 471.2L396.3 470.9L397.4 470.8L398.6 470.9L399.6 470.8L400.5 470.3L401.8 470.6L403.4 470.3L404.6 470.6L406.1 471.1L407.7 470.1L408.1 470.4L409.5 470.9L410.2 471.4L411.3 472.5L412.3 473.0L412.9 471.5L413.2 471.0L413.4 470.3L414.1 469.1L414.8 468.8L415.6 467.9L416.7 466.7L417.9 466.2L418.2 465.1L418.7 464.1L419.4 463.7L420.2 463.5L420.9 462.4L422.2 462.0L423.0 460.8L423.5 460.0L424.4 459.9L425.6 459.8L426.6 458.8L427.3 457.8L427.8 457.3L429.5 457.1L430.3 457.0L431.5 456.8L432.6 456.2L432.4 457.4L432.7 458.0L433.0 458.8L432.5 459.8L433.1 460.1L434.6 460.8L436.0 461.6L435.5 460.5L436.1 459.3L435.9 458.5L435.9 457.5L436.2 456.6L436.1 455.7L436.3 454.2L436.6 452.4L436.7 451.3L437.5 450.7L437.1 450.7L437.1 449.5L437.7 448.4L438.0 447.3L437.7 445.9L438.4 444.7L438.4 443.7L438.8 442.5L439.4 441.7L438.9 441.2L438.4 439.9L438.5 439.3L437.2 438.7L435.8 438.6L435.0 438.0L434.2 437.6L433.8 437.0L432.0 437.1L430.9 436.2L430.7 435.0L430.6 434.3L429.6 433.1L428.3 433.1L427.8 432.2L427.8 431.3L426.6 430.2L425.3 429.9L425.1 429.2L424.4 429.4L423.5 429.3L422.4 428.9L421.2 429.6L420.6 429.3L418.9 428.9L417.7 429.5L416.7 429.8L415.7 430.4L414.6 430.6L414.3 431.0L413.4 432.4L412.5 432.9L412.0 433.8L411.1 434.5L410.3 435.2L410.2 436.9L409.2 437.8L408.6 438.5L408.0 439.4L407.3 440.3L406.1 440.4L405.3 441.0L404.6 440.9L402.8 440.0L402.1 440.0L400.8 440.3L400.1 440.5L398.8 440.9L397.7 441.0L397.0 441.1L396.3 441.9L394.8 442.2L393.5 442.5L393.1 442.9L391.8 443.1Z"/>
<path fill="#f3e675" d="M438.7 404.1L438.2 405.3L438.2 406.9L437.8 407.3L438.1 409.0L438.0 410.0L437.7 411.1L437.4 411.9L437.5 412.9L436.2 413.5L434.8 413.6L433.8 413.3L433.4 413.7L432.2 413.8L431.3 414.3L429.8 414.3L428.8 414.6L427.9 414.9L426.7 415.3L425.8 415.4L426.4 416.3L425.8 417.8L425.5 419.2L426.0 419.9L425.3 421.5L425.5 422.1L425.6 422.7L425.9 423.5L426.5 424.7L426.5 426.3L426.3 427.0L426.5 427.8L427.2 428.8L428.1 429.6L428.5 430.9L428.8 431.6L429.8 432.4L431.0 433.3L431.5 434.3L431.4 435.0L432.8 436.0L434.0 436.8L434.4 437.4L435.0 437.2L436.4 437.9L437.4 438.3L438.8 438.3L439.7 438.2L440.7 438.7L440.9 438.9L442.3 438.6L443.7 439.2L444.4 439.0L445.5 439.5L446.6 440.1L448.2 440.3L449.1 441.2L449.9 441.4L450.4 441.0L451.4 441.3L452.8 442.0L453.0 443.2L454.5 443.4L455.7 444.4L455.4 445.1L456.5 446.8L456.4 447.7L456.9 448.7L457.4 449.5L457.5 450.1L458.5 451.0L459.2 451.5L459.5 452.2L460.1 453.4L460.9 455.3L461.6 454.4L462.7 453.8L463.7 453.6L464.8 453.4L466.0 453.3L467.1 452.7L468.5 452.4L469.4 453.0L470.3 453.1L470.8 453.2L471.7 453.7L473.0 454.0L473.8 453.9L474.9 453.6L475.6 454.2L476.7 454.4L477.8 454.1L478.9 453.9L480.3 453.1L481.4 453.0L482.3 452.7L483.6 452.6L485.3 453.0L485.7 451.9L485.4 451.7L485.5 450.7L484.8 449.7L484.2 449.1L484.0 447.4L483.2 447.1L482.5 446.3L481.9 445.2L481.1 444.2L480.6 443.2L480.5 442.2L480.5 441.5L480.0 440.3L480.6 439.6L481.4 438.8L482.6 438.5L483.9 437.6L484.5 437.2L484.8 437.6L485.4 436.8L486.1 436.0L486.8 435.1L487.5 433.8L487.8 432.7L488.4 432.0L488.2 430.3L489.0 429.0L490.0 428.9L491.2 428.8L491.0 429.2L491.9 430.9L492.2 431.9L493.2 432.1L494.2 432.0L495.3 432.5L497.2 432.6L498.0 433.1L498.0 433.6L498.7 434.9L499.6 435.3L500.9 436.3L501.7 437.0L502.3 437.7L503.4 437.9L504.8 438.5L504.5 438.4L505.6 439.7L506.4 438.8L506.9 437.3L508.4 437.2L509.0 436.3L509.9 434.9L510.7 434.2L510.5 433.4L511.4 432.8L512.2 431.8L512.8 430.5L513.5 429.2L512.8 428.4L511.9 427.8L512.3 427.3L511.6 426.4L510.1 425.6L509.8 425.3L509.4 424.0L508.6 424.5L507.3 425.5L506.9 426.6L506.1 427.0L505.1 426.5L504.0 426.3L502.4 425.8L502.3 424.7L501.8 423.4L501.1 423.0L500.2 421.7L500.0 420.9L499.8 419.3L498.8 419.3L498.1 418.8L497.2 417.0L495.8 416.5L494.9 415.7L494.5 414.9L494.1 414.2L493.4 413.4L491.7 412.8L491.4 412.3L490.5 411.2L489.6 411.3L488.3 411.0L487.5 409.8L486.7 409.2L485.6 408.5L485.3 407.7L484.6 407.3L483.2 406.4L482.4 406.3L482.2 405.9L481.4 405.5L480.4 404.8L478.9 403.8L478.2 403.5L477.6 403.4L476.0 403.4L475.0 402.4L473.5 402.6L473.2 402.7L472.0 402.6L470.5 402.4L469.4 401.8L468.6 401.5L467.9 401.3L466.1 402.3L465.6 401.4L464.6 401.5L463.2 402.4L462.4 402.3L461.2 402.2L461.8 403.5L462.0 404.5L461.3 406.3L461.7 406.3L462.0 407.7L460.3 408.8L459.8 409.7L458.9 410.7L457.5 409.8L456.1 409.3L455.1 408.4L455.0 407.3L454.3 406.4L453.4 405.0L452.6 404.9L451.8 405.0L450.5 404.4L449.7 404.9L449.1 405.0L448.4 405.6L447.0 405.8L446.0 405.4L445.5 404.9L444.0 405.2L443.0 404.6L441.5 404.9L440.5 405.2L439.4 404.9Z"/>
<path fill="#f9b95b" d="M439.1 439.0L439.0 440.6L439.4 441.6L439.1 442.3L439.0 443.3L439.1 444.2L438.9 445.2L439.2 446.4L439.4 447.5L439.0 448.8L438.3 450.8L438.9 451.2L439.3 452.1L440.0 453.9L439.7 454.6L440.8 454.2L441.9 454.0L442.8 453.8L444.4 453.2L444.7 454.3L444.3 456.2L443.3 457.5L443.8 457.9L443.5 459.5L442.7 460.9L442.8 461.7L442.5 462.8L441.2 463.2L440.6 464.8L439.8 465.4L439.0 466.1L437.9 466.8L436.4 467.0L435.5 468.5L434.3 468.3L433.9 469.4L433.7 470.6L432.4 471.4L431.9 471.8L431.7 472.4L430.3 473.7L429.3 474.3L428.6 475.2L427.8 476.3L427.5 476.7L426.9 477.8L426.0 479.4L425.6 479.7L424.2 480.5L423.4 481.2L422.6 482.3L422.0 482.9L421.2 483.7L420.5 485.3L421.0 486.1L420.4 486.9L419.8 487.7L419.8 488.7L419.6 489.9L419.6 491.3L419.8 491.9L419.5 493.4L419.9 494.5L420.4 495.4L420.3 496.4L420.1 497.5L420.2 498.3L419.7 498.9L420.6 499.8L420.7 500.5L420.8 501.4L421.3 502.8L421.7 504.5L421.6 505.7L421.4 506.4L421.5 506.9L421.7 508.0L421.8 509.6L422.6 510.6L422.4 511.3L422.1 512.0L422.4 512.0L422.8 510.8L424.0 510.4L424.8 510.0L425.9 508.5L426.4 508.0L426.4 506.8L427.0 505.7L427.6 505.7L428.6 504.7L429.2 503.5L429.3 503.1L430.4 502.2L430.8 501.5L431.7 499.8L432.2 499.2L433.1 498.5L433.7 498.2L434.6 497.1L435.5 496.1L435.7 495.1L436.1 494.6L435.8 493.2L436.4 492.6L436.7 491.6L437.0 490.0L437.6 488.5L438.3 487.7L438.1 487.1L438.5 485.8L438.2 485.6L438.6 484.2L438.7 483.0L438.5 482.2L438.5 480.9L438.5 479.5L438.2 478.5L438.5 477.4L438.8 476.2L438.6 475.3L438.7 473.8L439.5 471.9L439.4 470.8L439.5 470.5L441.2 469.7L442.4 468.7L442.4 469.2L443.0 468.7L444.2 467.6L445.5 467.6L446.5 467.2L447.4 466.6L448.0 466.0L449.2 465.7L450.5 466.1L450.5 466.2L451.7 466.2L453.1 465.9L454.0 465.4L454.9 465.2L456.2 465.8L456.7 465.1L458.2 465.6L459.2 465.8L459.8 465.8L460.9 465.4L461.6 464.8L462.5 464.3L463.6 463.1L464.4 462.3L465.1 462.0L465.9 461.4L466.1 460.8L466.9 460.0L467.7 458.7L468.8 457.1L468.5 456.5L468.9 455.0L469.6 454.1L469.6 454.1L468.8 454.0L467.8 454.7L466.0 454.8L465.1 454.8L464.5 454.6L463.6 454.3L462.3 454.5L461.2 454.8L460.2 453.2L459.7 452.0L459.6 451.6L459.1 450.6L458.1 449.5L457.6 448.8L456.8 448.2L456.7 446.8L456.3 445.7L455.9 444.8L455.3 443.7L453.6 443.2L453.1 442.2L452.2 441.7L450.7 440.6L450.2 441.3L449.4 441.2L448.4 440.4L446.9 440.0L445.8 439.6L444.6 439.0L443.8 439.5L442.2 438.8L441.1 439.8L440.5 439.3Z"/>
<path fill="#f9b95b" d="M360.0 530.9L358.2 532.2L358.3 532.5L357.9 533.7L357.1 535.0L356.0 535.8L356.2 536.7L355.5 537.7L355.0 539.0L353.7 538.7L352.3 538.3L351.1 539.1L351.0 540.5L350.8 540.7L351.1 541.8L350.8 543.1L351.6 544.0L352.3 544.3L353.2 545.0L354.3 546.9L355.5 546.9L356.2 546.7L357.3 546.2L358.6 546.1L360.0 545.6L360.4 545.0L361.5 543.5L362.1 543.0L362.7 542.4L363.6 540.7L364.4 540.3L365.3 539.6L365.2 538.8L366.3 537.8L366.9 537.4L366.9 536.0L368.4 535.1L368.9 534.7L369.5 533.8L369.8 533.4L371.0 532.5L370.0 530.9L369.3 529.8L369.6 528.0L368.3 528.5L367.0 528.5L365.7 529.3L365.1 529.7L364.1 530.0L363.1 530.0L361.6 530.2L360.7 530.4Z"/>
<path fill="#f9b95b" d="M176.4 375.8L176.1 377.3L176.0 377.8L176.1 379.3L175.8 380.3L175.1 380.9L174.6 381.8L174.3 383.2L174.4 384.3L173.7 384.6L173.4 385.5L172.8 387.2L171.8 387.5L172.4 389.0L171.3 390.1L170.5 390.9L171.1 392.2L171.1 393.1L170.8 393.7L171.5 394.7L172.2 396.7L171.9 397.0L171.6 398.2L171.9 400.2L172.4 400.0L172.3 401.5L172.8 402.7L171.9 403.6L171.6 404.7L171.6 405.9L171.9 407.3L171.7 409.0L170.4 409.0L169.1 409.3L168.7 410.1L167.8 410.6L166.5 410.8L166.5 411.9L166.6 413.3L166.9 414.1L167.2 415.4L167.3 416.2L167.1 417.2L166.6 417.9L166.1 419.0L166.0 419.4L165.4 420.3L164.7 421.1L164.1 422.4L164.1 423.3L162.7 424.6L162.7 425.9L162.5 426.4L161.7 427.6L160.4 427.8L159.7 428.5L158.6 429.5L157.7 430.3L158.5 431.3L157.8 432.6L157.8 433.4L157.6 434.8L157.3 436.2L157.5 437.1L158.4 437.9L158.5 439.2L158.8 440.2L159.1 440.4L159.2 441.1L160.8 441.8L162.1 441.1L162.6 441.0L163.9 440.9L164.9 440.8L165.6 440.7L166.8 440.6L168.4 440.5L169.5 441.1L170.3 440.7L171.3 440.0L173.0 440.3L174.4 441.0L175.3 441.4L177.1 441.7L178.2 442.1L178.7 442.6L179.0 443.5L179.5 444.5L180.6 444.8L181.4 445.7L182.5 445.9L184.0 446.9L184.5 446.9L185.9 448.3L186.7 449.0L187.9 449.1L189.3 448.9L190.4 448.7L191.3 449.3L192.2 449.5L193.0 449.7L194.2 449.4L195.4 449.6L196.2 450.2L196.8 450.2L198.4 450.4L199.1 450.7L199.9 450.8L201.2 450.8L202.4 450.8L203.0 451.1L203.4 450.9L204.4 451.0L206.2 451.1L207.2 451.4L207.6 451.5L208.9 452.0L209.5 452.4L210.4 452.2L211.8 452.5L212.7 453.6L213.8 453.9L215.1 453.0L215.9 453.6L216.8 453.6L217.8 453.9L219.1 453.6L220.0 453.6L220.6 452.1L220.4 451.3L219.8 450.1L219.6 449.3L219.3 448.5L220.2 447.1L220.2 445.8L221.0 445.8L221.6 444.9L222.4 444.2L222.4 443.6L222.5 441.9L221.9 440.9L221.6 440.0L221.7 438.7L220.9 437.3L220.0 436.3L219.9 436.0L219.1 434.6L218.5 433.3L217.9 432.5L217.5 431.9L217.1 431.2L217.6 430.0L216.9 428.6L216.6 427.7L216.6 427.1L215.7 426.5L216.5 424.9L216.3 423.8L215.2 423.3L214.4 422.3L214.3 421.1L214.6 420.2L213.9 419.4L214.4 417.6L214.8 416.6L214.5 416.1L214.0 415.5L214.1 414.6L214.8 412.7L213.9 411.6L213.4 410.9L213.0 410.2L212.5 409.0L212.0 408.1L211.6 407.3L210.8 406.6L210.1 405.5L209.1 405.4L208.4 405.2L208.1 404.1L207.5 403.2L207.6 401.8L207.3 400.1L206.5 399.7L206.3 398.6L206.5 397.6L206.3 396.6L205.6 396.1L205.5 394.7L205.0 393.6L203.5 392.8L203.2 391.7L202.4 390.4L203.1 389.9L203.8 389.6L204.1 388.4L204.6 387.2L204.3 386.1L203.9 385.0L204.4 384.0L203.3 382.6L202.8 381.5L202.5 381.3L202.6 382.4L201.6 383.9L200.9 384.8L200.2 386.0L200.0 386.8L200.1 387.2L198.8 388.7L198.2 389.9L196.9 390.0L195.8 390.1L194.8 390.3L194.4 389.6L193.7 388.5L192.2 388.1L191.7 387.0L191.3 385.9L191.3 384.3L191.3 383.4L190.2 383.4L189.6 383.8L188.3 383.7L187.2 384.8L187.9 385.6L188.3 386.8L188.3 388.6L188.4 389.3L189.0 390.3L189.4 392.0L189.6 392.5L189.8 393.5L189.7 395.1L188.7 396.6L189.3 397.2L189.0 397.8L188.7 398.8L188.8 400.2L189.3 401.6L189.0 402.8L190.0 403.5L190.5 404.5L190.6 405.8L191.1 406.6L192.2 406.5L192.7 406.7L193.7 406.8L195.1 407.0L196.0 407.1L196.3 407.2L197.3 408.1L198.1 408.5L199.1 409.3L200.0 410.5L200.0 411.2L200.4 412.3L201.1 413.4L201.0 414.1L201.2 415.3L201.6 416.2L202.4 417.5L202.9 418.8L202.6 419.7L201.0 419.8L199.8 419.7L199.9 417.7L199.5 416.6L198.8 415.7L198.7 415.0L198.3 414.0L198.4 412.9L197.7 412.1L197.2 411.1L197.0 409.8L196.6 409.4L195.9 409.8L194.8 410.0L194.0 410.5L192.6 411.2L191.8 411.6L191.2 412.5L190.6 413.8L190.7 415.2L190.8 416.3L190.2 417.1L189.1 417.6L189.4 418.0L189.0 419.3L187.9 421.0L187.5 421.7L186.9 422.2L186.4 423.8L186.3 425.1L185.6 425.1L184.5 425.5L184.0 426.7L183.8 427.5L183.1 428.7L181.8 428.4L180.7 428.1L179.8 428.6L178.5 429.0L178.4 427.5L177.0 426.2L178.2 425.2L178.9 424.4L179.3 423.8L179.2 422.0L180.1 421.6L181.6 421.1L182.1 420.6L183.1 420.0L183.3 419.7L184.0 418.4L184.6 417.0L184.8 415.7L185.7 414.9L185.5 413.8L185.4 412.7L185.5 412.1L185.9 411.2L186.3 409.9L185.9 408.6L186.1 407.2L186.1 406.8L186.3 405.6L186.4 404.8L186.6 403.9L186.6 402.7L186.0 401.3L185.9 400.5L185.4 399.5L185.1 398.7L184.8 397.6L184.5 396.6L184.9 396.4L184.6 394.8L184.5 393.4L184.1 393.0L183.3 391.3L183.6 390.4L183.5 389.5L183.1 388.2L183.3 387.0L183.9 386.2L184.7 385.5L184.4 383.9L184.9 383.1L184.7 381.9L184.8 381.1L184.8 380.2L184.5 378.7L184.5 377.6L184.0 376.2L183.1 376.1L182.6 376.2L181.2 376.2L180.3 376.6L178.6 376.4L177.5 375.8Z"/>
<path fill="#f9b95b" d="M149.9 437.0L149.5 437.7L149.2 438.9L148.6 439.9L148.4 441.1L148.5 442.5L148.4 443.4L148.6 444.0L148.2 445.2L148.0 445.7L148.0 446.9L148.4 448.0L148.8 448.5L148.3 450.1L148.4 451.6L148.5 452.4L148.2 453.0L148.2 454.2L148.9 455.6L149.5 456.7L149.3 457.3L149.4 458.2L150.3 458.4L151.3 458.5L152.8 458.1L154.2 457.9L154.2 458.4L156.2 459.2L156.9 459.7L157.1 460.5L157.9 461.5L158.7 462.4L158.7 463.3L159.9 464.1L160.1 464.5L160.4 465.4L160.2 466.7L161.0 467.3L161.8 468.6L162.5 469.7L163.2 471.0L163.3 472.1L163.6 472.8L164.3 473.6L165.2 473.9L166.2 475.1L167.5 475.3L168.0 474.6L168.9 474.5L169.9 474.4L170.4 473.3L171.2 472.6L172.3 472.6L173.0 472.1L173.6 471.8L175.0 470.8L176.2 470.5L177.1 470.2L177.8 469.5L178.7 470.2L179.5 470.3L180.6 470.6L181.6 471.0L182.8 471.3L184.5 472.2L185.4 471.8L185.5 473.1L186.7 473.7L188.4 473.6L189.2 474.8L189.9 474.7L190.8 474.1L191.8 473.8L192.7 473.3L194.9 473.8L195.0 472.5L194.9 471.2L195.6 469.8L196.3 469.4L196.1 468.9L197.0 467.8L197.5 466.3L198.2 465.8L198.4 465.4L199.1 464.7L200.3 464.2L202.1 463.4L202.8 463.6L203.4 463.9L205.2 463.8L206.7 463.9L207.5 463.6L208.1 463.2L208.7 463.3L209.8 462.9L210.5 462.8L212.1 462.9L213.1 462.1L213.9 462.0L214.7 462.3L215.9 461.9L216.9 461.8L218.0 461.9L219.0 461.0L220.1 459.4L220.1 458.5L220.6 457.8L220.8 457.6L220.9 456.2L220.9 454.1L219.9 453.5L219.1 453.5L217.8 453.5L216.9 453.4L216.1 453.5L215.0 452.8L213.9 453.2L213.0 452.9L212.2 451.8L210.6 451.6L210.0 452.1L209.0 451.5L207.6 451.1L207.0 450.9L206.2 450.5L204.6 450.5L203.5 450.4L202.9 450.5L202.4 450.2L201.3 450.1L199.9 450.3L199.3 450.3L198.4 450.0L197.0 449.6L196.1 449.6L195.4 449.4L194.6 449.0L193.0 449.0L192.1 449.2L191.1 448.7L189.6 448.1L188.7 448.2L186.9 448.5L186.3 447.9L185.2 446.9L184.4 446.5L183.4 445.8L181.9 445.3L181.0 444.5L180.3 444.2L179.8 443.8L180.0 443.0L179.0 441.6L178.3 441.1L177.5 441.5L176.4 440.8L175.3 440.7L174.9 440.5L172.8 439.8L171.4 439.7L170.5 440.0L169.7 440.3L168.9 440.4L167.8 440.0L166.5 440.2L165.5 440.1L164.8 440.0L163.9 440.0L162.6 439.7L161.9 439.5L161.1 439.8L160.1 439.8L159.1 439.9L158.9 438.4L158.2 437.2L157.6 436.5L157.4 435.5L157.4 433.7L156.3 434.3L155.1 434.6L154.0 435.3L153.2 435.7L152.9 435.0L151.3 436.4L150.4 436.9Z"/>
<path fill="#f3e675" d="M197.0 463.4L197.3 464.2L196.5 464.9L196.5 466.3L196.1 467.6L195.5 468.7L195.8 469.3L194.9 470.3L194.7 471.5L194.7 473.1L194.7 474.2L194.0 474.9L194.0 476.0L194.2 477.1L193.7 478.0L193.7 479.1L193.6 480.2L194.6 481.7L195.2 482.6L196.2 484.1L196.7 484.2L197.9 484.4L198.6 485.1L199.1 485.1L200.7 484.8L201.5 485.8L202.0 486.5L204.2 486.5L205.1 486.7L206.1 487.5L207.2 488.0L208.4 488.4L209.7 488.9L210.6 487.7L210.5 488.1L211.6 487.8L213.1 487.9L214.2 487.6L215.0 487.1L216.3 487.1L217.1 486.9L218.3 487.0L219.2 487.2L219.8 487.6L220.7 488.0L222.7 487.5L223.6 486.6L223.9 486.6L225.4 486.2L226.5 486.0L227.6 485.8L228.6 485.5L228.5 484.3L228.7 483.4L229.8 482.3L230.4 481.4L231.1 480.1L230.6 478.9L231.2 478.0L231.2 477.2L231.7 475.4L231.1 474.8L230.9 473.8L230.2 472.3L229.6 471.3L229.5 470.9L228.8 469.1L228.1 468.6L226.6 467.3L226.3 466.6L226.1 466.3L225.0 465.5L223.9 464.7L222.9 464.5L222.7 463.5L221.6 462.7L220.4 462.4L219.6 461.6L219.1 461.4L217.7 461.4L216.6 461.4L215.7 461.5L214.6 461.9L213.7 461.4L212.9 461.9L211.9 462.6L210.5 462.4L210.0 462.6L208.7 462.9L207.8 462.6L207.2 462.9L206.6 463.4L205.4 463.3L203.6 463.4L203.2 463.1L202.5 462.8L201.1 463.7L199.8 464.1L198.4 463.7Z"/>
<path fill="#f3e675" d="M167.1 475.4L166.4 476.2L165.3 477.1L164.8 479.0L164.0 479.8L164.8 481.3L165.6 482.6L166.2 483.2L166.1 484.1L166.7 485.2L167.4 486.0L168.0 486.6L168.4 487.7L169.7 488.2L170.8 488.9L171.7 489.1L172.6 489.8L173.4 489.7L174.8 490.3L175.9 491.1L177.3 490.5L178.1 489.2L179.2 488.6L180.6 488.0L180.6 487.6L180.9 486.7L181.3 485.9L181.5 485.0L181.4 483.5L181.3 482.0L182.5 481.5L183.1 480.5L183.2 479.4L184.3 479.1L185.6 479.5L187.0 479.8L188.2 479.9L189.4 479.8L190.1 479.5L190.6 479.4L191.9 479.6L192.4 478.6L194.7 479.1L194.8 478.0L194.4 476.7L193.7 475.6L193.3 474.4L193.2 473.2L192.1 473.5L190.9 473.8L189.8 474.3L189.0 473.8L188.0 473.5L186.2 473.4L185.7 472.4L185.4 471.6L184.4 471.8L182.8 471.2L181.7 470.7L180.5 470.0L179.6 469.4L178.3 469.5L177.6 468.6L176.7 469.6L175.9 470.1L175.2 470.5L173.7 471.2L172.4 471.1L171.4 472.1L171.1 472.2L170.3 473.1L169.9 474.3L168.5 474.2L167.7 474.7Z"/>
<path fill="#f3e675" d="M180.9 479.5L180.6 480.8L180.8 482.0L180.8 483.0L181.3 484.6L181.4 485.7L181.2 486.5L180.9 487.4L181.3 488.1L181.8 489.5L181.8 490.5L181.9 490.9L181.9 492.4L182.6 493.3L182.8 494.0L182.9 495.8L183.7 496.1L184.5 497.0L185.3 497.4L186.0 497.9L186.8 498.1L188.5 498.2L189.0 498.5L189.2 498.3L190.1 497.6L191.2 496.0L192.3 494.7L192.9 494.3L193.5 493.5L193.8 492.5L194.1 491.4L194.6 490.8L195.2 489.8L195.1 489.4L194.9 488.4L195.2 486.7L195.0 485.3L194.5 484.9L195.0 483.8L194.9 483.0L194.3 482.2L193.5 481.1L192.9 480.0L193.0 478.4L192.0 479.1L190.8 478.8L190.0 478.8L189.5 479.1L188.3 479.2L186.8 479.1L185.6 479.2L184.4 478.9L183.2 479.3L182.5 479.5Z"/>
<path fill="#ef6b77" d="M68.8 404.1L67.1 405.1L66.0 405.3L64.7 404.9L64.8 406.0L64.2 407.0L63.0 407.7L62.2 408.7L62.8 410.1L62.5 410.9L62.1 411.7L62.3 413.1L62.0 414.7L62.6 414.9L62.9 415.7L62.5 416.7L62.6 417.8L63.7 419.3L63.5 419.6L63.8 421.2L64.4 421.9L64.9 422.5L65.2 423.7L65.2 425.1L66.9 425.0L67.9 425.7L68.2 425.8L69.2 426.0L70.4 424.6L71.3 424.2L72.2 423.3L73.0 423.3L74.5 424.0L76.0 424.1L76.5 424.6L77.1 424.9L78.1 425.3L79.4 425.4L81.1 425.9L81.7 426.6L82.4 426.7L83.2 426.9L84.3 427.2L85.0 427.8L86.1 428.1L87.3 428.7L88.2 429.0L89.0 429.1L90.5 429.0L91.4 429.6L92.2 428.7L93.0 428.2L94.1 427.5L94.6 426.8L95.9 425.1L96.1 424.0L95.9 423.2L96.8 421.7L96.5 421.5L95.7 419.7L95.0 419.2L94.2 418.0L94.4 417.4L93.1 416.9L92.7 415.5L91.0 414.9L90.5 414.8L89.7 414.3L88.3 412.8L87.2 412.2L86.7 412.3L86.2 411.3L85.4 410.3L84.1 409.8L83.4 409.5L82.3 409.3L80.8 408.6L79.7 408.1L79.8 407.6L78.4 407.4L77.2 406.7L76.2 406.0L74.9 405.4L74.9 404.8L73.9 405.5L72.2 405.1L71.0 404.8L69.6 404.5Z"/>
<path fill="#f9b95b" d="M66.2 426.7L66.5 427.8L66.4 429.6L65.8 430.5L65.5 431.1L65.9 432.1L66.8 433.4L66.9 435.0L66.5 435.0L67.1 436.4L67.7 437.5L67.9 438.1L67.9 439.0L67.9 439.8L69.0 441.4L68.6 442.8L69.0 443.6L68.8 444.6L69.4 445.6L69.9 446.8L69.8 448.1L69.7 448.9L69.4 449.9L69.0 450.7L68.6 451.4L68.2 452.6L67.5 453.8L66.8 453.9L65.9 454.8L65.4 455.7L65.7 457.6L65.2 458.6L65.4 459.2L65.2 459.7L64.8 460.6L66.7 460.5L67.4 461.1L67.6 461.2L69.5 461.2L70.9 460.9L71.6 460.5L72.2 460.6L73.3 461.1L74.6 461.5L75.3 461.0L76.2 461.2L77.1 460.7L78.1 460.3L79.2 460.4L80.5 460.8L82.2 461.6L83.0 460.9L83.8 460.7L85.3 460.3L85.8 459.6L86.4 457.6L86.8 456.6L87.1 455.9L86.2 455.0L85.6 453.1L85.8 452.7L85.1 451.4L85.0 450.1L85.0 449.6L84.3 448.9L83.8 448.5L83.2 446.8L83.0 445.5L82.6 444.3L81.7 443.9L81.6 443.0L81.2 442.1L80.6 442.4L79.9 441.0L79.0 439.8L78.3 438.9L78.3 438.5L78.0 437.3L77.8 436.4L77.3 435.2L77.4 434.4L77.4 432.9L76.7 431.4L76.5 430.7L76.0 430.6L75.3 429.2L73.9 428.7L72.8 428.7L72.3 427.9L71.1 427.7L70.0 427.7L68.8 427.6L67.8 427.3L67.3 426.8Z"/>
<path fill="#ef6b77" d="M95.3 433.5L95.3 435.1L95.0 435.2L95.3 436.3L96.6 438.9L96.2 439.9L95.7 440.5L95.3 441.4L94.2 441.4L92.9 441.2L91.8 440.8L90.9 440.9L89.9 441.1L88.1 442.1L88.3 442.5L88.2 443.6L88.1 445.0L87.7 445.8L86.8 445.8L86.2 446.3L84.7 447.0L83.4 447.7L84.1 448.8L84.7 449.2L85.5 449.8L85.2 450.9L86.2 452.2L86.8 453.0L87.5 454.3L87.8 455.9L87.6 456.7L88.1 458.0L88.5 459.3L88.8 460.0L89.9 460.9L90.1 461.8L90.8 462.5L91.8 462.9L92.8 462.7L93.9 462.6L95.3 462.7L96.4 462.7L97.3 462.8L98.8 462.8L100.3 462.8L100.2 463.0L102.6 462.4L102.5 461.9L103.9 461.5L105.6 461.3L106.4 461.2L107.9 461.1L109.4 460.9L110.2 461.7L112.0 461.2L112.2 460.8L113.9 460.6L116.1 460.9L117.0 460.1L117.3 460.2L118.4 460.0L119.6 459.9L119.3 459.0L118.9 457.9L119.0 456.7L119.0 456.2L118.4 454.2L118.9 453.0L117.7 452.8L117.1 452.9L115.9 452.4L115.4 450.6L115.1 450.2L114.7 448.5L114.5 447.5L113.6 446.1L112.9 445.5L113.3 443.9L113.3 442.5L113.7 441.4L114.8 441.0L116.3 440.1L117.1 440.2L118.0 439.9L118.5 438.8L119.8 438.5L120.9 438.0L120.6 437.2L120.2 436.5L119.4 436.0L119.2 435.3L118.5 433.7L118.8 432.3L118.4 431.2L118.1 430.2L117.4 430.1L116.6 430.3L115.5 430.9L114.1 431.3L112.8 430.3L112.1 430.5L110.9 430.3L109.4 430.7L108.6 430.9L107.6 430.5L106.5 430.1L105.7 429.7L104.1 429.8L102.3 429.2L101.3 428.8L100.3 428.7L100.4 428.8L99.2 429.8L98.4 430.9L97.6 431.2L96.2 431.7L95.6 432.4Z"/>
<path fill="#ef6b77" d="M82.2 460.8L82.3 461.7L82.0 462.1L81.2 463.0L80.7 464.1L81.1 465.9L81.4 466.5L81.6 467.5L81.6 468.3L81.8 469.2L81.9 470.5L82.0 471.5L82.2 472.7L83.6 473.1L84.5 473.6L86.1 473.6L87.5 473.5L88.1 473.9L88.7 473.5L90.2 473.8L91.4 474.2L92.7 473.8L93.3 474.0L94.8 473.9L95.9 473.5L97.3 473.1L98.3 473.7L99.8 473.4L100.0 472.3L101.6 473.0L103.0 472.5L103.6 472.0L104.8 471.6L106.1 471.6L106.9 471.7L108.2 470.9L109.2 470.7L109.3 470.0L110.7 469.4L111.7 468.8L111.8 467.9L111.4 466.1L111.3 465.1L111.6 464.5L111.5 463.6L110.7 463.0L109.0 462.8L108.6 462.9L107.3 462.5L105.6 462.6L104.7 462.6L103.3 462.8L102.5 462.8L101.0 463.4L100.2 463.3L98.9 463.2L97.2 463.4L96.2 463.5L95.1 463.9L94.1 464.0L93.5 464.0L91.9 463.9L91.1 463.5L90.3 463.6L89.3 463.1L88.3 463.2L86.5 462.5L85.9 462.4L85.2 461.7L84.1 461.5L83.3 461.3Z"/>
<path fill="#f9b95b" d="M120.9 429.1L120.6 429.7L120.1 430.6L120.0 432.1L119.1 432.9L118.8 434.3L118.9 435.5L119.4 436.4L120.2 437.0L120.1 437.8L118.8 438.4L118.2 439.0L117.5 440.0L116.7 439.7L114.8 440.3L113.7 441.0L113.3 442.2L113.1 443.7L112.6 444.4L112.2 445.7L112.7 445.6L113.5 446.9L114.4 448.0L114.4 449.2L115.4 450.5L115.0 450.4L116.0 453.1L116.7 452.9L116.9 452.8L117.8 453.2L118.8 453.9L118.9 455.5L119.1 456.6L118.9 457.2L118.9 458.9L119.5 459.2L119.1 461.0L118.3 461.7L118.9 463.0L119.1 464.6L119.0 465.3L119.5 466.9L119.2 468.2L119.6 469.4L121.0 469.0L122.1 469.2L123.5 468.7L124.1 468.9L124.9 468.7L126.4 467.6L127.8 467.2L128.0 466.5L128.1 465.7L128.7 464.2L129.9 464.1L131.5 463.9L132.9 464.0L134.2 463.8L135.2 462.8L135.9 461.8L136.7 462.1L138.1 461.3L139.1 460.8L140.2 460.0L141.1 460.3L142.6 460.5L143.5 460.1L144.4 459.5L146.0 458.9L147.3 459.2L147.8 459.3L147.8 458.1L148.6 456.8L148.4 456.3L147.9 454.8L148.1 453.1L148.8 452.4L148.8 451.8L149.3 450.6L149.4 449.0L149.2 448.2L149.1 447.3L149.0 445.9L149.5 444.8L149.5 444.3L150.1 442.2L150.7 442.4L149.7 440.9L150.4 440.2L151.3 438.8L152.0 437.8L151.8 436.3L153.2 436.4L154.1 435.4L155.6 434.0L156.1 433.1L156.7 432.6L157.3 432.1L157.9 430.7L158.4 430.0L159.0 428.9L160.3 428.1L161.2 427.8L162.2 426.7L162.6 425.9L162.6 424.9L164.0 423.5L164.6 422.6L165.2 421.6L166.0 421.2L166.5 420.4L167.4 419.4L167.0 418.1L166.8 417.5L166.4 416.4L165.9 414.7L164.8 415.4L164.1 416.0L163.0 415.9L162.8 416.4L162.1 416.8L160.9 417.9L159.8 418.8L159.7 419.4L159.2 420.7L157.9 420.9L156.6 421.5L155.9 422.7L155.1 423.1L154.5 423.8L153.6 423.7L152.9 423.8L152.0 423.9L151.1 423.8L150.2 423.5L148.4 424.3L147.5 423.7L146.9 424.1L145.7 424.2L144.9 424.4L144.2 424.2L142.8 423.5L140.9 423.9L140.7 423.8L139.1 424.2L138.6 424.1L137.7 423.5L136.3 423.3L135.1 423.7L134.6 423.8L133.6 423.4L132.6 423.2L131.1 424.2L130.3 424.1L129.2 423.7L127.6 423.5L126.7 423.5L126.0 424.4L125.6 425.1L124.8 425.9L123.0 425.9L122.7 427.1L122.3 427.8L121.6 428.9Z"/>
<path fill="#ef6b77" d="M129.0 464.0L130.0 465.5L130.7 466.1L131.0 466.4L132.2 467.7L133.0 468.6L133.3 469.7L133.6 470.6L133.3 472.1L133.8 473.1L134.6 474.0L135.2 475.0L134.9 476.1L134.9 477.4L135.7 478.4L135.5 480.0L135.2 481.0L135.7 481.8L136.4 482.9L136.3 484.0L136.3 484.6L136.5 485.9L138.0 485.4L138.5 485.4L139.4 485.7L141.2 485.7L142.3 485.9L142.2 484.2L142.4 483.4L143.6 482.6L144.3 481.5L144.7 480.6L145.0 479.7L145.5 478.2L146.3 478.0L146.0 476.2L146.4 475.1L146.8 474.2L147.3 472.7L147.7 472.3L147.4 471.6L146.9 470.0L147.0 468.6L147.3 467.6L146.4 466.9L146.8 465.6L147.1 464.2L147.6 463.2L147.2 461.8L148.0 461.2L147.8 460.0L147.1 459.1L145.2 459.3L143.9 459.8L143.2 460.2L141.9 460.4L140.8 460.1L140.1 460.0L139.1 460.7L138.3 461.3L137.0 462.0L136.1 462.2L135.6 462.4L134.7 463.4L133.4 463.9L132.0 463.9L130.1 464.0Z"/>
<path fill="#f9b95b" d="M148.9 458.8L148.5 460.2L148.3 461.8L148.3 462.4L148.0 463.3L147.3 464.2L146.8 465.5L146.4 466.9L147.3 467.5L147.1 468.5L146.9 469.8L147.4 471.4L147.8 472.3L147.4 472.6L146.7 473.9L146.5 475.0L146.0 475.8L146.2 477.5L145.7 478.2L145.2 479.1L144.8 480.2L144.7 481.0L144.2 482.0L143.2 483.2L142.8 484.0L142.5 484.6L142.5 486.0L143.1 486.3L144.2 486.3L145.3 486.4L146.5 487.0L148.3 487.1L148.7 487.0L150.4 486.7L150.6 486.1L152.0 486.5L153.3 486.6L154.7 486.5L156.0 485.9L157.2 485.6L157.9 486.0L158.6 485.5L158.9 485.3L160.0 484.3L161.0 483.7L162.8 482.8L162.4 481.5L163.2 480.8L164.1 479.7L164.8 478.9L165.4 477.5L166.3 476.5L166.8 475.7L167.0 475.0L166.7 474.2L165.7 472.9L164.6 472.5L163.7 472.3L163.2 471.7L162.8 470.8L161.5 469.7L160.4 468.2L159.8 467.5L160.0 466.8L159.0 465.0L159.1 464.6L158.4 463.8L158.2 462.9L158.3 461.8L156.4 460.9L156.8 459.8L155.7 459.0L154.0 458.1L154.3 457.7L152.4 458.2L150.8 458.7L150.3 458.5Z"/>
<path fill="#f9b95b" d="M195.8 484.3L194.7 484.9L194.5 485.4L194.7 486.6L194.1 487.5L194.2 488.8L194.1 490.2L193.7 490.9L193.6 491.9L194.0 493.1L194.1 494.2L194.2 495.3L194.4 496.7L194.8 497.5L195.0 498.1L195.9 499.2L197.1 499.8L198.5 500.3L199.8 500.3L200.1 500.8L201.2 501.3L202.4 501.4L203.7 501.4L204.0 500.6L205.1 500.0L206.3 500.2L207.0 500.0L207.8 499.9L209.0 499.1L210.5 498.5L210.8 499.2L212.3 498.7L212.8 498.3L214.0 497.8L215.4 497.6L216.3 497.4L217.3 496.8L218.2 496.3L218.8 496.4L219.1 495.0L219.9 493.7L221.3 493.5L220.8 491.9L219.5 490.7L219.0 490.3L219.1 489.8L218.9 488.5L218.7 486.7L217.3 486.9L216.3 487.3L215.4 487.4L214.6 487.9L213.3 488.2L211.4 488.1L210.5 488.1L210.2 487.6L209.1 487.9L208.4 487.1L207.7 486.3L206.4 486.3L205.5 485.2L204.4 484.9L203.4 485.4L202.5 484.8L201.2 484.1L199.7 484.6L198.8 484.7L197.8 484.3L196.6 484.4Z"/>
<path fill="#f9b95b" d="M202.2 501.4L202.0 503.1L202.3 503.5L202.5 504.0L202.8 505.3L203.7 506.8L204.0 507.2L204.8 508.3L205.6 508.9L206.6 510.1L206.6 510.6L207.3 511.7L209.3 511.7L210.5 512.9L210.5 513.2L211.9 513.1L213.2 513.4L214.0 513.2L215.1 513.0L216.6 512.4L216.7 511.7L218.7 511.7L219.5 511.4L220.2 511.0L221.3 510.2L222.1 509.5L222.4 508.2L223.2 507.0L223.7 506.5L224.1 505.4L223.8 504.5L224.3 503.2L224.8 501.8L224.2 501.4L223.0 500.4L222.5 499.6L221.7 498.9L221.4 498.9L219.9 497.9L219.3 497.1L218.5 497.1L217.1 497.2L216.1 497.8L215.3 497.8L213.5 498.2L212.7 498.6L211.7 499.0L210.7 499.5L210.3 498.9L208.3 499.9L207.5 500.1L206.8 500.1L205.9 500.1L204.7 500.2L204.0 500.9L203.4 501.9Z"/>
<path fill="#f9b95b" d="M220.1 489.0L220.2 489.5L220.0 490.2L221.3 491.3L221.5 493.3L221.3 494.0L221.4 495.2L221.8 496.3L222.7 496.8L222.8 497.4L223.5 498.9L224.2 499.6L224.2 500.1L224.8 501.2L226.1 501.8L227.2 503.3L227.7 503.6L228.4 504.3L228.8 505.4L228.8 505.4L229.3 504.1L229.6 503.0L229.8 502.4L230.2 501.6L230.5 500.6L231.1 499.0L230.6 497.9L230.7 496.8L231.4 495.8L231.2 494.8L230.8 493.8L231.0 493.0L231.3 491.5L231.1 490.4L230.5 489.3L230.4 488.8L230.4 487.7L229.1 487.2L227.9 487.1L226.8 487.0L226.1 486.3L224.6 486.8L224.1 487.2L223.0 487.8L221.7 488.4Z"/>
<path fill="#f9b95b" d="M231.0 493.2L230.8 494.0L231.7 495.3L231.6 496.7L231.0 498.0L231.4 498.9L231.3 499.8L231.6 500.8L231.8 502.1L231.7 503.4L231.8 504.3L232.7 505.5L233.3 506.2L233.4 506.1L234.5 507.3L235.1 507.6L235.1 507.6L235.5 506.7L235.9 505.9L235.7 504.9L236.2 504.5L237.4 503.2L237.6 501.6L238.1 500.6L237.6 500.0L237.0 499.0L236.3 497.6L235.8 497.1L236.4 496.1L235.4 495.3L234.4 495.2L233.4 494.3L231.8 493.8Z"/>
<path fill="#f3e675" d="M219.2 513.1L219.8 513.6L219.8 514.5L220.3 515.9L220.3 518.1L220.7 518.5L221.6 518.6L222.7 519.2L223.4 520.0L224.4 520.4L225.7 520.6L227.1 521.1L227.8 520.7L228.8 520.1L229.8 519.2L230.9 518.2L231.8 517.5L232.8 517.4L231.7 516.4L231.7 514.9L231.2 513.7L230.6 512.6L231.1 511.8L230.8 511.4L229.2 510.7L228.3 509.9L226.7 509.4L226.3 509.0L225.2 509.2L224.0 509.8L223.0 510.4L222.5 510.8L221.3 511.7L220.3 512.4Z"/>
<path fill="#f9b95b" d="M232.7 509.5L233.3 510.8L233.7 511.8L233.8 512.7L233.6 514.4L234.3 514.9L235.7 514.5L237.3 514.7L238.6 515.1L239.5 515.2L239.4 515.3L240.3 514.9L241.3 514.6L242.9 514.6L244.2 514.5L244.6 514.1L246.4 514.3L246.9 514.3L247.6 514.6L248.7 515.2L249.9 515.8L251.4 516.1L252.1 516.2L253.2 515.6L254.4 516.5L255.4 516.1L255.0 515.2L255.3 514.4L255.5 513.8L256.1 512.4L256.3 511.5L256.4 509.5L257.2 508.4L256.9 508.3L257.1 506.9L257.7 505.4L258.1 504.5L257.1 504.3L256.2 503.8L255.0 504.1L254.0 503.0L253.5 502.5L252.0 502.5L251.0 502.3L249.5 501.8L248.7 502.4L247.8 503.0L246.9 503.5L246.5 504.1L245.2 504.5L244.5 505.2L244.4 506.1L243.1 507.2L241.5 507.4L240.6 507.9L239.9 508.0L239.4 507.8L238.2 508.1L236.2 509.2L235.3 508.8L234.3 509.5Z"/>
<path fill="#ef6b77" d="M157.6 486.6L157.3 487.9L157.2 488.2L157.7 489.7L157.1 491.6L158.0 492.5L156.6 493.4L157.1 493.8L158.7 495.1L159.7 495.8L160.5 496.2L161.4 496.2L162.1 496.8L163.1 496.4L163.6 496.6L164.7 495.9L165.9 495.4L167.0 495.4L168.5 495.0L168.6 495.0L169.9 494.3L170.8 493.2L171.6 493.0L172.8 492.4L172.8 492.3L172.0 492.2L171.5 491.7L171.0 491.0L169.3 490.6L168.2 489.9L167.7 489.9L166.6 489.0L165.5 488.3L164.8 488.0L164.4 487.4L163.6 487.9L162.2 486.6L160.7 486.8L159.8 486.3L159.0 486.3L158.1 486.7Z"/>
<path fill="#f9b95b" d="M106.1 412.2L106.3 414.0L105.4 414.4L105.8 415.8L106.2 417.5L105.5 418.6L105.0 419.5L105.0 420.5L104.8 421.9L105.4 422.7L106.1 424.1L106.4 425.4L106.4 426.2L107.3 426.5L108.1 427.4L109.3 429.1L110.4 429.1L111.2 429.6L111.6 429.6L113.1 430.0L114.6 431.3L116.3 430.4L117.6 430.1L118.1 429.5L119.4 428.6L120.7 427.8L121.8 427.1L122.3 426.9L122.6 425.7L123.9 425.6L125.5 424.9L125.8 424.1L126.6 422.7L128.5 423.0L130.1 422.9L131.1 423.1L132.3 422.6L133.3 422.8L134.4 423.2L135.0 423.2L135.8 422.8L137.3 422.9L138.5 423.3L138.7 423.5L140.0 423.1L140.8 423.2L141.8 423.3L143.3 423.1L144.3 423.7L145.1 423.7L146.3 423.5L147.2 423.2L148.0 423.4L149.2 423.5L150.8 422.8L151.3 423.4L152.4 423.4L153.0 423.2L153.6 423.1L154.2 422.0L155.3 421.9L156.0 420.8L156.7 420.2L158.1 418.8L158.9 418.0L159.3 417.3L160.6 416.2L160.2 415.3L161.9 414.4L162.6 413.4L163.0 412.5L163.9 411.0L163.6 410.1L163.6 409.1L162.9 408.6L162.2 408.0L161.8 406.7L161.1 405.7L160.7 404.7L159.0 403.9L158.4 404.0L156.5 404.0L155.5 404.2L154.8 403.6L153.2 404.2L152.6 404.4L152.0 404.7L152.0 405.9L152.5 406.2L153.4 406.7L152.8 407.9L152.6 409.5L151.8 410.4L150.8 411.6L150.4 412.5L149.5 413.6L148.4 414.4L146.4 413.6L146.1 412.5L146.0 411.2L145.8 410.7L145.5 408.8L145.5 408.8L145.2 409.9L144.2 410.6L143.2 411.3L142.7 412.6L141.5 412.7L141.1 412.6L140.3 412.7L139.1 413.4L138.0 413.7L136.3 413.9L135.6 414.6L134.9 415.6L133.4 415.5L131.6 415.4L131.0 413.9L130.3 413.0L129.0 412.4L128.2 412.8L127.6 413.2L126.1 414.0L125.2 414.8L124.1 414.9L122.4 415.2L121.4 416.0L121.0 417.2L119.4 418.3L119.3 418.3L118.2 419.2L117.0 420.2L116.6 420.9L115.7 421.6L116.2 423.5L114.6 424.9L114.3 425.3L112.6 426.5L111.6 425.5L110.0 425.1L109.4 424.8L108.5 423.0L108.1 422.0L108.2 421.8L107.3 419.9L108.0 419.0L109.4 418.2L110.7 417.6L111.5 417.0L110.7 415.8L110.5 415.5L109.7 414.7L109.2 413.7L107.4 413.3L106.6 413.3Z"/>
</g><g stroke="none">
<path fill="#f3e675" d="M204.7 386.8L204.6 387.7L204.8 388.8L204.2 390.3L204.8 391.1L204.5 391.7L203.9 392.9L203.4 394.5L203.3 395.0L203.0 395.7L204.2 397.7L203.8 398.1L204.5 399.1L205.3 399.6L206.0 400.7L205.8 401.9L206.1 403.7L207.2 404.6L208.0 405.5L208.3 406.1L209.1 406.2L209.6 407.4L211.0 407.5L211.5 408.3L212.5 407.8L213.4 407.3L214.5 407.0L215.3 407.2L216.1 406.4L216.5 405.5L216.3 404.0L216.1 402.6L216.3 401.8L216.4 400.6L215.5 399.8L215.1 399.3L213.5 399.2L212.6 398.6L212.9 397.7L212.7 396.8L212.4 395.2L212.5 393.8L212.2 392.8L211.9 391.8L211.8 391.2L212.2 390.5L212.3 388.3L213.2 387.8L212.1 386.9L210.6 386.3L210.0 385.3L208.8 384.5L208.1 385.1L206.8 385.4L205.5 385.9Z"/>
<path fill="#ef6b77" d="M132.0 372.8L131.4 373.1L130.9 373.8L130.5 374.9L130.4 375.7L130.5 376.6L130.2 377.6L129.4 378.4L129.3 379.9L128.7 381.0L127.8 381.7L127.4 382.9L126.7 384.1L126.6 384.8L127.5 386.2L128.6 387.0L129.6 387.2L131.1 388.0L131.6 388.5L131.8 389.9L132.6 390.2L133.8 391.4L134.7 392.3L135.4 392.7L136.4 392.8L137.1 393.7L137.1 392.9L137.3 392.0L138.3 391.1L139.3 390.4L137.9 389.2L137.3 388.0L136.9 386.7L136.7 385.9L136.7 385.2L136.1 384.0L136.0 382.7L136.1 381.4L136.1 380.0L135.9 378.8L136.2 378.7L136.5 377.4L137.2 376.1L137.9 374.8L138.0 373.7L137.5 372.7L136.9 371.1L135.6 371.2L134.3 372.4L133.1 371.3Z"/>
<path fill="#f3e675" d="M248.2 265.3L247.8 266.8L247.6 267.6L247.0 268.1L245.8 268.4L245.2 269.2L244.6 270.0L244.1 271.0L243.2 271.7L242.7 272.6L242.3 274.0L241.9 274.1L241.8 275.6L241.4 277.0L241.2 277.6L240.5 278.1L240.2 279.3L240.0 280.2L239.7 281.1L240.6 281.9L240.8 282.5L241.7 282.7L242.5 283.6L243.8 283.9L243.9 285.1L244.6 286.0L245.8 284.6L246.9 284.6L247.8 284.6L249.0 283.9L250.1 283.3L251.0 282.8L251.7 282.3L251.8 281.2L251.9 280.3L252.2 279.8L252.4 278.3L253.4 276.9L253.3 275.9L253.6 274.6L253.8 273.7L253.1 272.9L252.2 272.1L252.3 270.6L251.8 269.8L251.0 269.2L250.0 268.1L249.8 267.0L248.9 266.8Z"/>
<path fill="#f3e675" d="M237.9 288.5L238.5 289.1L239.3 289.8L240.1 290.4L240.8 291.2L242.5 292.5L243.0 290.9L243.1 290.2L243.9 288.9L242.9 289.2L242.0 288.9L240.8 288.2L239.4 288.2L238.2 288.1Z"/>
<path fill="#f3e675" d="M247.6 286.1L247.3 287.9L246.8 289.0L245.6 290.2L245.2 290.9L244.9 292.0L246.1 293.3L246.3 294.0L246.6 295.5L248.1 296.0L248.8 297.5L248.8 298.5L249.0 298.7L250.6 299.5L251.7 299.9L252.1 301.0L252.9 302.0L253.5 302.5L254.1 302.9L255.0 303.7L256.2 304.3L257.5 304.5L258.0 305.2L259.1 305.6L259.3 305.1L259.6 303.5L260.1 303.0L260.3 302.2L260.6 300.8L261.5 300.1L261.5 298.9L261.6 298.1L261.5 297.0L261.3 296.0L261.2 295.1L261.4 293.6L261.0 292.5L260.7 291.5L260.8 291.0L260.5 289.8L260.1 288.3L259.6 288.3L258.1 287.8L257.0 288.2L256.0 288.5L255.5 287.0L255.3 286.5L254.6 285.0L253.9 284.2L252.7 285.0L251.3 285.7L251.0 285.9L249.9 285.6L248.4 286.1Z"/>
<path fill="#f3e675" d="M267.2 300.5L268.0 301.2L266.8 301.9L266.6 303.0L266.4 304.1L265.3 304.8L265.1 305.6L264.7 307.1L264.6 307.5L264.4 308.4L263.9 310.0L263.3 310.7L263.2 311.5L262.3 313.1L262.3 313.6L262.1 315.5L262.2 317.0L262.3 317.0L262.5 315.9L263.1 315.6L264.5 315.4L265.4 315.3L266.9 314.4L267.4 313.5L268.6 313.2L269.6 313.3L269.9 313.3L271.1 313.0L271.8 312.4L273.1 311.6L274.5 311.6L275.5 311.4L276.0 310.7L276.9 310.4L277.4 310.2L276.7 309.1L276.3 307.9L276.2 307.1L275.9 305.9L275.7 304.7L275.1 304.1L273.8 303.6L273.3 303.1L272.4 302.7L272.0 302.6L270.8 301.9L269.5 301.5L268.2 300.9Z"/>
<path fill="#ef6b77" d="M172.4 331.9L171.0 332.1L169.5 332.5L168.8 333.1L167.7 333.3L167.4 333.7L166.8 334.9L166.0 335.2L164.7 337.1L163.9 338.0L162.8 338.4L161.8 338.8L161.2 338.6L159.5 338.6L158.4 339.4L157.5 340.0L156.5 340.4L155.5 340.9L155.5 340.6L153.9 341.1L153.1 341.2L151.7 341.7L150.8 342.5L150.3 342.6L149.3 343.5L148.7 343.9L147.4 344.8L146.7 345.3L145.3 345.5L144.8 345.9L144.5 346.6L143.3 347.9L142.8 349.2L142.1 349.8L140.7 350.2L139.9 351.5L139.9 352.3L139.1 352.7L139.6 354.5L139.5 355.5L140.4 355.2L141.5 355.8L143.3 355.9L144.2 355.1L145.6 355.1L146.4 355.1L147.5 354.7L148.2 354.2L149.0 353.7L149.8 352.4L151.0 351.6L151.7 350.9L152.2 350.2L153.4 349.3L154.3 348.8L155.1 348.1L155.5 347.8L156.7 346.8L157.5 346.4L158.2 346.2L159.3 345.6L160.5 345.5L161.0 345.0L161.5 344.5L163.3 343.3L164.6 342.8L164.8 342.7L164.9 342.5L166.5 341.6L167.7 340.9L168.4 340.6L169.3 340.2L170.9 339.8L171.5 339.1L172.6 338.7L173.4 338.2L173.4 336.8L173.8 335.6L174.1 335.0L173.3 333.2L172.1 332.5Z"/>
<path fill="#ef6b77" d="M139.5 355.6L138.9 356.5L138.5 357.9L138.5 359.1L139.2 360.0L138.0 360.8L138.9 361.7L139.7 362.9L141.6 362.6L141.6 361.4L141.6 360.6L142.0 360.0L142.9 358.7L143.1 358.1L141.7 357.4L140.6 355.9Z"/>
<path fill="#ef6b77" d="M136.8 363.2L136.7 363.9L136.7 365.5L136.3 367.0L135.9 367.7L135.4 368.3L136.2 368.8L137.6 369.6L138.8 370.5L140.1 370.9L139.5 370.1L140.0 368.7L140.2 367.6L140.2 366.8L139.7 365.8L139.4 364.8L138.5 364.8L137.7 364.1L136.8 363.2Z"/>
<path fill="#ef6b77" d="M370.0 340.6L369.3 341.3L369.1 341.3L368.2 342.2L368.1 343.8L367.5 344.9L366.7 345.9L367.8 346.4L367.9 347.5L367.3 349.1L367.0 350.5L367.2 351.1L367.4 352.0L368.2 352.5L368.8 354.0L369.7 355.2L371.5 355.7L372.6 355.2L373.1 354.2L374.7 354.4L375.6 353.6L376.3 353.2L377.2 353.1L378.5 352.7L379.1 352.2L379.6 351.3L380.0 349.9L379.8 348.6L380.2 348.2L380.4 347.0L379.8 345.6L379.2 345.1L378.7 344.4L378.6 342.8L378.0 341.5L377.8 341.4L377.2 342.0L376.5 343.1L376.4 344.5L375.3 345.3L374.6 346.3L374.6 345.1L373.9 343.6L372.7 343.3L371.4 342.0L371.6 341.8L371.0 341.4Z"/>
<path fill="#ef6b77" d="M383.5 344.5L382.8 345.4L382.2 346.4L381.7 347.1L382.3 348.1L382.6 349.3L382.8 350.3L382.3 350.8L383.8 351.0L385.1 351.1L385.9 351.3L386.9 351.7L387.3 350.4L387.7 348.8L386.7 348.2L387.5 347.2L385.8 346.0L385.7 344.7L384.9 344.8Z"/>
<path fill="#ef6b77" d="M394.1 349.1L393.9 349.8L394.9 351.6L394.9 352.2L395.4 353.5L396.6 353.0L397.4 353.3L398.6 354.4L399.6 354.7L400.8 354.5L401.4 355.4L402.8 355.5L403.6 355.5L405.2 354.4L405.2 352.1L404.2 351.6L403.1 351.9L402.5 351.9L400.9 351.5L400.4 351.1L399.6 350.6L397.9 350.3L397.2 350.2L396.1 350.0L395.1 349.1L394.1 349.1Z"/>
<path fill="#ef6b77" d="M376.9 365.0L377.0 365.9L377.4 367.3L376.8 368.7L378.4 368.4L379.3 368.7L379.7 369.4L380.6 369.7L382.2 370.2L383.3 370.5L384.2 370.2L384.6 370.1L384.0 370.4L383.0 368.6L382.5 367.8L381.8 367.0L381.3 366.5L380.5 366.0L378.5 366.3L377.6 365.7Z"/>
<path fill="#f3e675" d="M482.9 391.1L484.1 391.3L485.4 392.5L486.2 392.2L486.8 392.3L487.8 391.9L488.8 392.2L490.4 392.3L491.3 391.1L491.5 390.6L493.0 389.8L493.8 389.1L493.7 389.0L492.5 389.1L491.7 388.7L490.2 388.6L489.1 388.3L488.2 388.0L486.8 389.0L486.0 389.1L484.5 389.4L483.9 390.2L482.9 391.1Z"/>
<path fill="#f3e675" d="M349.2 522.2L349.7 522.9L350.1 523.9L350.6 525.0L351.1 525.8L351.5 527.2L352.6 526.8L353.7 526.7L354.8 527.1L355.1 526.4L355.9 525.0L356.0 524.8L356.4 524.0L355.5 522.6L354.8 521.5L354.6 520.2L352.8 520.9L352.1 521.4L351.0 521.9Z"/>
<path fill="#f9b95b" d="M381.7 502.8L381.0 503.9L381.2 505.2L381.1 506.5L380.9 507.3L380.9 507.7L380.7 508.5L380.9 509.8L380.4 510.8L380.6 511.5L380.9 512.6L380.8 514.0L380.6 515.2L381.2 515.9L381.6 516.6L381.5 518.2L381.1 519.3L381.1 520.0L381.7 520.6L381.7 521.4L381.8 523.3L382.0 524.0L382.0 525.2L382.7 525.2L383.2 524.4L383.2 522.5L383.7 521.8L384.4 520.7L384.4 519.6L384.8 518.5L385.4 517.7L385.1 517.5L385.8 516.4L385.7 514.6L385.9 513.4L385.2 512.3L385.0 511.7L385.2 510.9L384.7 510.0L384.1 508.7L384.4 507.1L383.9 506.2L384.3 505.6L383.8 504.3L381.9 503.2Z"/>
<path fill="#ef6b77" d="M140.0 359.4L139.7 360.4L138.2 360.6L137.6 361.9L137.3 363.2L136.6 363.5L136.7 364.7L135.9 366.4L135.6 367.2L134.8 367.7L134.7 368.8L135.7 369.1L136.9 369.8L138.7 370.7L138.6 370.2L139.4 368.9L140.1 367.7L140.5 367.1L139.9 366.3L140.8 365.5L141.6 364.1L142.4 362.6L142.3 361.5L142.3 360.5L141.5 360.2L141.0 359.7Z"/>
<path fill="#f9b95b" d="M118.2 406.4L117.2 407.3L116.9 409.9L118.2 410.1L120.2 409.4L120.5 408.5L120.2 407.2L118.8 407.4Z"/>
<path fill="#f3e675" d="M39.0 494.9L39.9 495.6L40.2 497.3L41.5 497.2L42.6 497.0L44.0 496.5L44.2 495.9L44.6 495.1L43.6 494.8L41.8 494.0L40.4 495.1Z"/>
<path fill="#d6e55a" d="M70.3 485.5L71.2 486.9L70.8 488.7L71.8 489.0L73.9 489.0L75.4 488.8L76.1 488.2L76.8 487.9L77.6 487.3L78.4 486.3L79.8 486.2L81.3 486.0L81.8 485.1L83.1 484.4L83.6 485.0L84.6 484.0L85.9 482.8L86.0 482.3L86.6 481.3L85.8 479.8L86.1 479.2L85.9 478.3L85.5 477.0L83.9 478.3L82.4 478.5L82.0 477.9L81.0 478.5L80.2 479.6L78.8 480.6L77.2 480.9L76.6 481.1L76.1 481.8L74.6 482.4L73.6 483.4L73.0 483.7L72.3 484.7L71.1 484.5Z"/>
<path fill="#f9b95b" d="M88.3 477.1L88.2 477.4L87.8 478.8L88.4 480.5L88.7 481.8L89.1 482.1L89.8 483.7L90.4 484.0L91.7 485.0L91.6 483.9L92.2 483.5L92.6 482.1L93.2 481.6L94.5 480.3L94.9 479.6L94.6 478.9L94.6 477.7L94.1 476.6L93.5 475.4L92.2 475.0L90.8 475.2L90.3 475.8L89.4 475.8Z"/>
<path fill="#8fd544" d="M94.0 484.6L94.9 484.9L96.1 485.2L97.9 485.4L98.4 486.0L99.9 485.4L100.5 485.2L101.2 484.4L101.6 483.1L101.3 482.1L100.6 482.1L98.8 482.1L97.5 482.4L96.5 482.9L95.4 484.0L94.8 484.1L94.0 484.5Z"/>
<path fill="#8fd544" d="M89.1 487.3L91.1 488.6L91.7 489.3L92.5 490.5L93.6 490.1L94.5 491.2L95.6 491.6L97.3 491.9L98.1 492.7L99.0 491.1L99.2 490.3L99.4 489.1L100.4 488.1L98.9 488.0L97.7 488.5L97.2 488.0L95.8 487.6L95.1 487.1L93.7 487.6L92.8 486.7L92.0 486.5L89.2 487.2Z"/>
<path fill="#ef6b77" d="M81.3 488.5L81.6 490.2L82.0 491.6L82.6 492.1L84.3 492.0L85.1 492.6L85.6 491.4L85.6 490.1L86.6 489.9L87.8 488.5L87.6 487.3L87.8 485.7L86.5 485.9L85.5 486.5L84.4 487.4L83.7 487.5L82.6 488.2L81.9 488.6Z"/>
<path fill="#ef6b77" d="M87.2 492.4L87.1 494.0L87.6 494.0L88.9 495.1L90.1 495.4L91.3 494.6L91.9 493.6L93.0 493.0L92.0 492.3L91.2 490.6L90.9 489.6L89.7 490.4L88.5 491.2L87.6 491.7Z"/>
<path fill="#ef6b77" d="M91.1 497.1L92.0 498.7L92.5 500.1L93.7 500.0L94.0 499.8L94.9 500.0L96.4 499.2L97.8 498.5L98.8 498.0L99.0 497.7L99.2 496.5L99.5 494.9L98.2 495.0L97.3 494.4L95.6 494.9L94.7 495.1L93.6 495.5L92.6 495.9L91.5 496.1Z"/>
<path fill="#f9b95b" d="M69.1 491.9L69.4 493.2L69.2 494.4L69.1 496.0L69.9 496.8L71.0 497.4L71.6 498.7L72.4 498.7L73.2 498.3L74.7 497.7L76.3 496.9L77.7 495.9L78.1 494.9L78.1 493.6L78.7 492.5L79.2 491.8L79.1 491.1L78.5 490.9L77.6 490.6L76.2 491.2L75.0 491.1L73.7 491.5L72.7 491.9L72.0 491.6L70.6 491.8L70.1 491.4Z"/>
<path fill="#f3e675" d="M78.8 495.1L78.8 496.9L78.4 498.1L78.4 499.2L79.0 499.8L79.9 500.5L80.5 501.3L81.1 499.5L82.6 499.0L83.2 498.0L83.9 497.1L84.7 496.0L84.7 494.6L83.7 493.8L82.6 493.8L81.4 493.9L80.6 493.9L79.5 494.5Z"/>
<path fill="#f9b95b" d="M85.1 498.0L84.9 499.6L85.1 500.9L86.0 501.0L87.0 501.4L87.4 502.4L88.9 501.0L89.3 499.4L88.2 498.8L87.9 497.4L87.1 495.9L86.6 496.8L85.6 497.9Z"/>
<path fill="#8fd544" d="M71.0 503.7L71.6 504.5L72.5 505.6L73.7 506.4L74.1 506.5L75.2 506.6L76.5 506.1L78.1 506.4L77.8 504.7L77.7 503.7L78.0 502.4L77.9 501.6L77.7 500.9L77.0 500.7L75.9 501.2L74.9 501.4L73.8 501.9L72.8 502.8L72.5 503.1L71.8 503.1Z"/>
<path fill="#ef6b77" d="M80.7 502.4L81.0 503.5L81.5 504.4L82.3 506.0L83.0 507.0L84.1 507.1L85.4 507.7L86.1 506.4L86.7 505.9L86.2 504.2L85.3 502.7L84.3 502.2L83.4 502.0L82.3 502.2Z"/>
<path fill="#f3e675" d="M89.0 503.7L89.0 505.1L89.9 506.8L90.8 507.9L91.1 507.3L92.0 507.0L93.7 505.9L92.8 505.0L92.6 503.6L92.3 502.9L91.5 502.6L90.5 503.5Z"/>
<path fill="#f3e675" d="M95.1 502.3L94.6 503.3L95.3 505.1L94.8 505.7L95.8 507.4L96.8 508.4L98.0 508.5L98.5 508.5L99.9 508.1L100.4 507.4L101.1 506.9L101.2 506.3L101.0 505.1L100.3 503.8L99.4 503.0L99.3 502.5L98.9 501.5L97.5 501.9L96.3 502.2L95.3 502.1Z"/>
<path fill="#ef6b77" d="M101.4 501.0L101.5 501.9L101.7 503.1L102.7 504.5L104.0 504.7L104.8 505.6L105.0 506.0L106.3 506.0L107.8 505.2L108.8 505.6L109.7 506.0L110.6 505.0L111.2 504.4L112.7 502.9L112.0 501.6L110.9 500.7L109.8 500.4L108.4 501.0L107.8 501.2L106.7 501.7L105.8 501.9L105.2 501.4L103.9 500.9L102.2 501.0Z"/>
<path fill="#f9b95b" d="M102.4 482.9L102.5 485.0L102.5 486.2L102.9 486.9L102.1 488.2L101.5 489.0L101.2 489.4L101.0 491.2L100.7 492.0L101.1 492.6L101.7 493.6L102.7 494.0L103.6 494.4L104.6 495.0L105.9 493.9L106.9 492.6L108.0 492.6L107.9 491.2L108.6 489.8L109.1 488.6L109.3 486.7L110.0 486.0L110.3 484.5L110.4 484.2L110.8 483.2L111.2 481.6L111.2 480.8L111.3 480.2L110.9 480.3L109.3 480.7L108.0 480.7L107.3 481.3L106.6 481.9L105.4 482.3L104.1 482.3L103.1 482.4Z"/>
<path fill="#f9b95b" d="M111.2 485.1L111.4 486.7L112.1 487.5L113.5 487.6L114.8 487.9L115.4 487.5L116.5 487.1L118.1 487.4L119.4 487.4L120.0 487.5L120.0 486.4L120.4 485.2L121.0 484.7L121.3 483.8L121.2 483.7L120.2 483.3L119.2 484.1L118.3 484.5L117.5 484.7L116.2 485.2L114.4 485.4L113.5 485.3L112.2 485.3Z"/>
<path fill="#f9b95b" d="M128.2 477.5L127.8 479.1L128.0 479.2L127.8 480.5L127.6 482.1L127.3 483.1L127.1 483.3L127.8 484.5L128.3 486.0L128.3 486.5L130.0 486.3L130.7 485.1L130.8 484.3L132.0 483.5L132.4 482.3L132.5 481.6L132.5 480.7L131.9 479.7L131.6 478.3L131.9 476.9L131.0 477.0L129.5 478.1Z"/>
<path fill="#f9b95b" d="M116.7 489.7L116.5 491.0L117.6 492.3L117.9 492.7L118.2 494.2L118.8 494.5L119.8 494.2L121.3 494.3L121.9 494.9L122.9 495.1L125.2 495.9L125.5 495.7L126.7 496.0L127.9 495.6L128.9 495.0L129.7 494.8L130.3 494.3L130.4 493.2L131.1 491.9L131.4 490.8L130.7 491.1L129.5 490.9L128.6 489.9L126.6 489.9L126.3 489.6L125.1 488.8L123.6 488.1L122.9 488.6L122.2 488.0L121.3 487.4L120.2 487.7L118.9 489.3L117.5 489.6Z"/>
<path fill="#f9b95b" d="M111.9 498.2L112.5 499.8L113.1 501.4L112.8 502.4L113.7 502.5L115.5 502.7L115.8 503.1L116.6 502.7L118.1 502.0L119.0 501.2L120.3 500.8L121.0 500.6L122.1 500.0L121.1 498.5L121.0 497.5L121.0 496.6L119.3 496.7L118.0 496.4L117.2 496.4L115.7 497.3L114.8 498.0L114.0 497.6L113.4 497.5Z"/>
<path fill="#f9b95b" d="M111.5 489.2L111.6 490.1L111.2 491.0L111.7 492.8L112.0 493.9L113.5 494.8L114.8 494.3L115.3 493.8L115.4 493.6L115.5 492.4L115.5 490.4L114.6 490.0L115.2 488.1L113.4 489.0L112.9 488.7Z"/>
<path fill="#f9b95b" d="M101.8 496.8L102.7 497.7L103.2 498.5L104.4 499.2L105.0 499.3L107.1 499.1L108.2 498.9L109.0 498.5L109.4 497.3L109.8 496.4L109.7 496.2L108.5 495.9L107.6 496.1L106.3 496.4L105.3 496.5L104.3 496.2L103.0 496.1L101.8 496.7Z"/>
<path fill="#ef6b77" d="M118.6 501.4L118.6 502.4L119.6 503.2L119.4 505.3L120.5 506.0L120.9 506.4L122.6 508.2L122.9 507.5L123.7 506.8L125.3 506.4L125.4 505.1L126.3 503.6L126.2 503.1L127.2 501.8L126.9 500.9L127.1 499.3L126.6 498.6L126.7 496.8L125.4 497.6L124.9 498.0L123.7 498.5L122.8 499.6L122.1 500.0L121.1 500.8L120.6 500.7L119.4 501.1Z"/>
<path fill="#ef6b77" d="M129.9 499.6L129.7 500.4L128.8 501.1L128.6 503.0L128.0 503.9L127.9 504.7L127.7 505.9L127.3 506.3L127.2 507.9L128.1 508.4L129.5 509.2L130.4 509.6L131.2 509.1L132.1 510.2L132.8 511.2L133.4 511.6L134.3 512.0L134.9 512.6L136.0 513.3L136.2 514.1L137.2 513.6L138.6 513.0L140.1 512.6L141.1 512.6L142.1 512.6L143.2 512.7L143.9 512.7L145.7 513.4L146.7 513.8L148.3 513.5L148.3 513.4L150.0 513.9L151.4 512.9L152.2 513.0L152.6 512.5L152.6 512.4L152.5 511.8L151.4 511.6L150.5 511.2L149.3 510.6L148.4 509.2L147.6 509.2L146.6 509.3L145.4 509.2L144.7 509.8L143.1 510.3L142.0 510.6L140.3 510.7L139.4 509.0L138.6 508.4L138.5 507.2L137.2 507.3L136.5 505.9L135.3 505.7L134.5 504.7L134.0 503.5L133.0 502.9L131.9 502.1L131.0 501.1L130.3 500.1Z"/>
<path fill="#f9b95b" d="M134.5 489.2L133.9 490.1L133.2 491.3L132.8 492.7L132.5 493.8L131.9 495.0L131.3 495.9L131.8 496.6L132.6 497.8L133.7 499.4L134.2 499.9L134.7 500.3L135.4 501.2L136.3 502.5L136.1 502.5L137.6 503.4L138.2 504.4L138.9 505.9L139.2 506.4L139.9 506.5L140.9 507.2L141.6 508.2L142.7 508.2L143.7 509.3L144.0 507.9L144.7 506.3L145.2 505.8L145.6 504.6L146.0 504.0L146.6 502.3L147.7 501.7L147.3 500.3L147.9 498.9L147.6 498.1L146.4 498.4L145.2 499.1L143.8 499.4L142.7 498.3L142.3 497.9L141.4 497.3L142.0 495.1L142.6 493.8L143.4 493.7L144.9 492.8L145.9 491.8L146.9 491.3L146.9 490.3L146.9 490.3L147.1 490.3L145.8 490.2L144.5 490.2L143.5 489.6L142.3 489.4L142.0 489.2L141.3 488.8L139.7 488.6L138.4 488.3L137.8 488.4L137.0 488.9L135.9 488.4Z"/>
<path fill="#f9b95b" d="M148.9 489.5L148.9 490.5L149.5 491.3L149.8 492.5L149.5 494.1L150.5 494.7L151.0 495.8L152.0 496.9L152.8 497.5L153.7 498.7L154.4 498.6L155.5 498.2L156.4 497.6L156.7 497.3L156.3 495.4L155.5 494.7L155.8 493.7L155.4 492.7L155.4 491.1L155.6 490.0L155.7 489.7L155.3 488.7L154.4 488.1L152.4 488.9L151.6 488.9L150.5 489.2Z"/>
<path fill="#f9b95b" d="M148.3 498.7L147.8 499.8L147.6 501.3L147.2 502.2L147.3 503.6L149.0 504.9L150.8 505.7L150.5 505.0L151.3 504.0L152.2 503.1L152.2 501.7L152.0 500.6L151.7 499.3L151.6 498.3L150.1 498.6L148.9 498.9Z"/>
<path fill="#ef6b77" d="M157.5 487.9L157.4 488.6L157.2 490.2L156.7 491.6L157.9 492.6L157.6 493.3L158.8 494.1L159.6 495.0L160.3 496.3L161.1 496.7L162.0 496.4L162.9 496.3L163.6 496.4L164.9 495.7L166.0 495.5L167.4 495.2L168.7 495.1L169.2 495.1L170.4 493.9L170.8 492.9L172.2 492.5L171.6 492.5L170.9 491.5L170.0 491.0L168.4 490.2L168.0 490.0L167.0 489.2L165.7 488.5L164.7 488.4L164.1 488.0L163.4 487.9L162.1 486.5L160.4 487.2L159.2 486.9L158.7 487.7Z"/>
<path fill="#f9b95b" d="M102.5 508.3L102.4 509.1L103.2 509.8L104.2 511.2L105.3 511.3L106.7 511.6L107.7 511.8L108.7 512.2L109.9 512.4L110.7 512.1L111.7 512.8L112.9 512.7L113.7 513.4L115.0 514.4L116.1 515.1L116.6 515.8L117.7 515.3L118.2 514.2L118.9 513.1L120.5 513.1L120.9 511.3L120.6 510.5L121.6 509.7L122.8 509.5L121.8 508.9L120.8 508.0L120.1 507.5L119.6 507.4L118.3 507.2L117.0 506.6L115.5 506.4L114.1 506.4L113.5 506.3L113.1 506.2L111.5 506.2L110.4 506.6L109.8 507.1L109.0 506.6L107.6 506.7L106.1 507.4L105.6 507.5L104.0 507.7L103.7 508.1Z"/>
<path fill="#ef6b77" d="M99.0 513.7L99.2 514.7L100.3 516.7L100.1 517.2L100.6 518.1L100.8 518.8L100.6 520.4L101.3 522.2L101.4 522.9L101.5 523.7L101.5 524.5L102.2 526.0L102.2 527.3L103.6 526.5L103.7 525.1L104.6 525.1L106.1 524.5L107.4 523.6L108.9 523.3L109.1 522.8L109.6 522.5L111.1 521.2L112.0 520.3L112.5 519.0L113.2 519.0L113.7 517.3L113.9 516.4L112.4 515.6L111.1 515.3L109.8 514.8L108.1 514.7L107.0 514.7L105.9 514.2L104.4 513.3L103.5 513.2L102.6 513.0L101.7 512.9L101.2 513.2L99.9 513.3Z"/>
<path fill="#f3e675" d="M89.9 510.1L91.1 511.6L90.8 511.6L91.2 513.3L91.7 514.3L92.0 514.8L92.2 516.2L93.3 516.8L94.4 517.7L94.5 518.0L95.0 518.3L96.2 516.5L96.4 516.6L97.3 515.2L97.4 513.8L98.0 512.7L98.2 511.9L98.2 511.4L96.9 510.5L96.3 510.1L94.9 509.8L94.0 509.4L92.3 509.7L90.5 509.6Z"/>
<path fill="#f3e675" d="M78.6 509.0L78.4 510.5L79.6 511.7L80.4 511.5L81.6 511.2L83.2 511.2L84.2 510.8L85.0 509.7L84.4 509.6L83.4 509.2L82.7 508.5L82.1 507.9L80.2 509.0L79.6 508.5Z"/>
<path fill="#f9b95b" d="M83.0 513.4L83.1 514.0L83.9 514.8L85.4 515.5L86.7 515.1L88.0 516.2L88.5 516.5L89.4 515.8L90.2 515.1L89.7 514.3L88.9 513.5L88.3 512.4L87.2 511.6L86.2 512.2L84.6 512.7L83.4 512.9L83.0 513.2Z"/>
<path fill="#f9b95b" d="M94.9 519.9L94.7 520.6L94.4 522.1L94.1 523.1L94.2 523.9L94.5 524.9L93.6 526.2L93.0 527.3L92.2 528.1L92.5 529.6L92.6 530.2L93.1 530.8L94.6 531.1L95.7 531.8L96.4 531.7L97.0 531.9L98.4 531.3L99.8 532.0L100.9 531.8L102.5 531.4L103.1 532.4L103.7 531.4L104.4 529.5L103.1 529.6L101.9 527.8L101.3 527.1L100.6 526.5L100.0 525.6L100.0 525.0L99.3 523.8L99.7 522.0L98.9 521.1L98.2 519.7L97.6 518.8L96.5 518.6L95.6 518.9Z"/>
<path fill="#f9b95b" d="M106.5 527.5L106.3 527.9L105.9 528.3L105.4 529.4L105.5 531.1L105.3 531.5L105.5 532.2L106.1 533.3L107.4 534.5L108.3 535.3L109.3 536.5L110.5 537.3L111.4 537.7L112.0 538.1L112.3 536.7L112.4 535.8L112.3 534.4L112.6 532.8L112.7 531.8L112.6 531.0L111.6 529.9L111.0 528.6L111.2 527.8L110.0 527.2L108.9 526.5L107.8 526.2Z"/>
<path fill="#f9b95b" d="M87.3 536.4L87.5 537.6L87.1 538.8L88.8 540.0L89.6 540.4L90.4 540.9L91.4 541.5L92.6 540.7L94.0 541.7L94.4 540.4L94.8 539.8L95.5 538.2L95.8 537.4L95.4 536.3L95.1 535.7L94.9 533.9L94.7 533.2L93.5 533.0L92.1 532.6L90.9 532.1L90.4 533.0L89.5 533.6L89.0 534.0L87.5 535.5Z"/>
<path fill="#f9b95b" d="M98.4 536.2L99.0 536.9L99.2 537.6L99.7 538.4L100.2 539.6L100.9 540.2L102.6 540.9L102.9 541.7L103.9 541.4L105.4 541.7L106.4 541.8L106.6 541.4L108.1 540.4L108.7 540.3L108.5 539.0L107.6 538.4L106.5 537.2L105.9 536.0L105.4 535.8L104.2 535.3L102.8 535.2L101.8 534.8L100.5 534.8L98.9 535.0Z"/>
<path fill="#f3e675" d="M111.0 546.3L111.2 547.0L112.3 548.4L112.6 549.8L113.0 550.2L113.9 551.0L115.1 551.9L116.4 551.6L116.3 550.8L116.4 549.2L116.2 548.8L115.4 546.7L114.3 546.1L113.7 544.9L113.6 544.2L112.9 544.3L111.7 545.9Z"/>
<path fill="#f3e675" d="M110.3 523.4L110.1 524.6L109.9 525.9L111.9 526.3L112.0 525.5L111.7 524.7Z"/>
<path fill="#f3e675" d="M113.3 528.0L113.4 529.1L114.5 531.0L115.0 531.2L116.2 530.9L117.3 530.6L117.1 529.8L117.1 528.2L115.5 528.6L114.4 527.8Z"/>
<path fill="#f3e675" d="M97.4 542.7L96.8 544.3L98.4 544.5L99.9 543.9L98.9 542.8L97.9 542.6Z"/>
<path fill="#f9b95b" d="M61.7 462.7L61.5 463.8L61.7 463.9L62.2 465.8L63.3 466.3L64.5 466.8L65.4 467.3L66.2 467.7L66.6 468.4L67.7 468.5L69.1 469.1L69.3 470.1L69.9 470.1L70.9 470.9L72.6 471.4L73.7 471.8L75.1 472.1L76.2 471.3L76.4 470.9L78.0 470.6L78.9 470.1L79.8 469.5L80.5 468.5L80.7 467.3L81.2 466.5L81.0 465.5L80.4 463.8L80.4 462.6L80.8 461.2L79.6 460.4L78.9 460.7L78.1 461.3L76.8 462.1L75.6 462.3L74.9 462.3L74.5 462.7L73.1 463.1L72.0 463.0L71.3 462.8L70.6 463.1L69.6 462.7L68.3 461.9L67.5 462.2L66.5 461.8L65.4 461.9L64.4 462.1L63.2 462.2Z"/>
<path fill="#f9b95b" d="M60.3 469.8L61.2 471.6L61.6 472.2L62.2 473.1L62.2 474.6L63.1 474.3L64.2 474.1L66.0 474.7L66.3 473.8L66.8 473.3L67.7 472.3L67.4 471.0L66.7 469.9L65.4 469.1L64.1 469.4L63.4 469.7L62.1 469.8Z"/>
<path fill="#f9b95b" d="M66.4 476.6L66.7 478.0L66.5 479.0L67.1 479.9L67.6 480.6L67.4 481.7L68.0 483.3L69.1 483.0L70.3 482.8L71.6 482.3L72.4 481.4L73.7 480.4L74.7 480.3L76.1 480.6L76.4 479.7L76.9 479.4L77.9 478.7L78.9 477.1L78.8 475.7L79.5 475.8L79.5 474.1L78.5 473.7L78.0 473.7L76.9 473.6L75.2 472.9L74.3 473.2L73.0 473.4L72.6 473.3L70.7 474.5L70.3 474.6L69.5 474.6L68.5 475.6L67.4 476.4Z"/>
<path fill="#f9b95b" d="M59.7 476.3L59.7 477.0L59.4 478.8L59.5 479.4L59.7 480.6L60.6 482.3L60.2 483.7L61.1 484.6L60.9 485.3L61.5 486.5L62.0 487.7L63.9 487.8L64.9 488.4L65.8 489.8L66.7 489.1L67.4 487.9L68.1 487.6L67.9 487.2L67.7 486.2L67.2 485.0L66.7 484.2L66.2 483.2L66.0 483.3L65.6 481.7L65.0 480.2L64.5 479.4L63.6 478.8L63.1 477.9L62.4 477.6L60.8 476.7Z"/>
<path fill="#f3e675" d="M97.9 474.4L97.8 475.4L97.1 476.5L96.4 478.4L96.3 478.4L97.5 479.5L98.7 479.2L100.0 479.3L101.4 479.7L101.6 479.5L103.1 479.7L103.9 479.3L104.6 478.7L105.9 478.7L107.1 478.7L107.8 478.4L108.8 478.1L109.4 477.6L110.8 476.5L112.2 475.6L112.2 475.7L113.1 475.1L113.2 473.5L112.9 472.4L112.2 471.8L111.5 472.3L110.6 472.0L108.6 471.8L107.3 472.9L106.8 472.9L105.5 472.8L104.4 472.8L103.7 473.2L102.9 473.9L102.1 474.3L101.3 474.6L100.2 474.6L98.8 474.5Z"/>
<path fill="#f9b95b" d="M115.8 463.9L114.9 465.0L114.4 466.0L114.3 467.9L115.2 468.8L115.6 469.3L115.4 470.8L115.4 472.6L114.9 474.1L115.5 474.8L115.8 475.8L115.8 476.6L115.9 477.6L115.6 479.2L117.1 479.4L117.7 480.4L118.6 480.6L119.5 481.0L119.9 481.9L120.3 483.0L120.8 484.4L121.3 485.4L122.5 485.9L124.1 485.2L125.5 485.7L125.2 484.5L125.6 483.8L126.3 483.0L127.0 481.6L127.0 479.9L127.4 479.2L128.1 477.8L129.1 477.2L129.9 476.4L130.4 475.1L131.2 474.7L131.5 473.7L131.4 472.3L131.7 471.5L131.5 470.2L131.1 469.0L130.5 467.7L129.3 466.7L128.4 467.4L127.6 467.5L126.2 468.7L125.2 469.7L124.4 469.1L123.3 469.1L122.1 469.6L121.5 469.7L120.0 469.7L118.7 469.0L117.3 468.5L117.2 467.5L117.2 466.1L116.8 465.4L116.2 464.9L116.0 463.7Z"/>
<path fill="#f9b95b" d="M118.5 404.8L118.4 406.2L117.5 406.9L115.9 407.3L116.8 408.9L117.5 410.1L119.2 410.6L120.0 409.5L120.6 408.9L120.9 407.4L120.3 407.0L119.2 406.0Z"/>
<path fill="#f9b95b" d="M145.7 399.2L146.5 399.8L146.9 400.4L147.9 401.4L148.8 401.4L150.5 401.6L150.9 401.4L150.0 400.4L148.4 400.3L147.8 399.6L145.9 399.0Z"/>
</g><g fill="none" stroke="#fff" stroke-width="1.70" stroke-linejoin="round">
<path d="M309.5 484.0L308.9 484.0L307.5 484.0L306.4 484.6L305.4 484.1L303.9 484.2L303.0 484.5L302.4 484.3L300.9 484.3L300.3 484.2L299.1 484.6L297.8 484.7L296.8 484.6L296.1 484.4L295.3 484.5L293.9 484.6L293.5 484.3L291.9 485.6L290.3 485.7L289.4 485.6L288.4 486.1L287.6 486.0L287.8 487.2L287.5 489.2L287.3 490.3L287.3 491.3L286.8 491.8L286.0 493.1L286.1 494.1L286.1 495.2L285.9 496.6L286.2 497.5L285.6 498.2L284.5 498.6L284.1 500.3L283.5 501.5L283.0 502.0L281.9 503.2L281.7 504.0L281.3 505.4L280.2 506.2L279.1 506.9L278.5 507.2L277.4 508.4L276.8 509.3L276.3 510.0L275.8 510.1L274.9 510.9L273.6 512.0"/>
</g></svg>
<!-- legend -->
<div class="lg" style="left:203px;top:616.5px;font-size:11.8px;letter-spacing:0">Цвет: ОБЩИЕ СВЕДЕНИЯ</div>
<div class="dot" style="left:47.7px;top:642.1px;background:#ef6b77"></div><div class="lg" style="left:66.1px;top:642.85px">меньше 9,50</div>
<div class="dot" style="left:148px;top:642.1px;background:#f9b95b"></div><div class="lg" style="left:165.6px;top:642.85px">от 9,50 до 18,50</div>
<div class="dot" style="left:263px;top:642.1px;background:#f3e675"></div><div class="lg" style="left:281.2px;top:642.85px">от 18,50 до 32,00</div>
<div class="dot" style="left:384px;top:642.1px;background:#d6e55a"></div><div class="lg" style="left:401.9px;top:642.85px">от 32,00 до 45,50</div>
<div class="dot" style="left:47.7px;top:663.3px;background:#8fd544"></div><div class="lg" style="left:66.1px;top:663.55px">больше 45,50</div>
<div class="dot" style="left:148px;top:663.3px;background:#eaeaea"></div><div class="lg" style="left:165.6px;top:663.55px">нет данных</div>
</div><div id="lb"></div></div>

<div id="vs">
<div class="abs" style="left:1px;top:2px;width:6px;height:76px;background:#4d6082"></div>
<div class="abs" style="left:1px;top:91px;width:6px;height:42px;background:#4d6082"></div>
<div class="vt" style="left:25px;top:2px;transform-origin:0 0;transform:rotate(90deg);font-size:11.1px">Server Explorer</div>
<div class="vt" style="left:25px;top:91.5px;transform-origin:0 0;transform:rotate(90deg);font-size:11.9px">Toolbox</div>
<div class="abs" style="left:32px;top:2px;width:494px;height:19px;background:#364e6f"></div>
<div class="abs" style="left:32px;top:21px;width:538px;height:2px;background:#fff29d"></div>
<div class="abs" style="left:32px;top:2px;width:137px;height:20px;background:#fff29d"></div>
<div class="vt" style="left:36.2px;top:4.5px;color:#000;font-size:11.35px">ExpressBox.html</div>
<svg class="abs" style="left:135px;top:6px" width="12" height="12" viewBox="0 0 12 12"><path d="M1.5 6.5H4.5M4.5 3.3V9.7M4.5 4.5H8.5V8.5H4.5M4.5 7.6H8.5" fill="none" stroke="#3a3a2a" stroke-width="1"/></svg>
<svg class="abs" style="left:153px;top:6px" width="12" height="12" viewBox="0 0 12 12"><path d="M1.2 3L10.3 10M10.3 3L1.2 10" fill="none" stroke="#55553c" stroke-width="1.3"/></svg>
<svg class="abs" style="left:540px;top:6px" width="30" height="12" viewBox="0 0 30 12"><path d="M6 2L2 6L6 10M11 2L7 6L11 10" fill="none" stroke="#e6e9f0" stroke-width="1.4"/><rect x="19" y="1" width="8.4" height="2" fill="#e6e9f0"/><path d="M19 5H27.4L23.2 9.3Z" fill="#e6e9f0"/></svg>
<div id="ed">
<div class="abs" style="left:0;top:0;width:17px;height:619px;background:#e6e7e8"></div>
<div class="abs" style="left:84px;top:0;width:1px;height:619px;background:#a5a5a5"></div>
<div class="ln" style="top:1.50px">22</div>
<pre style="top:1.50px">    }</pre>
<div class="ln" style="top:17.96px">23</div>
<pre style="top:17.96px"><span class="k">&lt;/</span><span class="m">style</span><span class="k">&gt;</span></pre>
<div class="ln" style="top:34.42px">24</div>
<pre style="top:34.42px"><span class="k">&lt;</span><span class="m">script</span> <span class="a">text</span><span class="k">="text/javascript"&gt;</span></pre>
<div class="ln" style="top:50.88px">25</div>
<pre style="top:50.88px"><span class="k">var</span> expressBox, eaxMdService, eaxAnalyzer;</pre>
<div class="ln" style="top:67.34px">26</div>
<pre style="top:67.34px">PP.ImagePath = <span class="s">"build/img/"</span>;</pre>
<div class="ln" style="top:83.80px">27</div>
<pre style="top:83.80px">PP.ScriptPath = <span class="s">"build/"</span>;</pre>
<div class="ln" style="top:100.26px">28</div>
<pre style="top:100.26px"> <span class="k">function</span> Ready()   {</pre>
<div class="ln" style="top:116.72px">29</div>
<pre style="top:116.72px">    <span class="k">var</span> IMAGE_PATH = <span class="s">"build/img/"</span>; <span class="c">// Путь к папке с пикто</span></pre>
<div class="ln" style="top:133.18px">30</div>
<pre style="top:133.18px">    <span class="c">// Укажем путь к корневой папке, содержащей файлы ресу</span></pre>
<div class="ln" style="top:149.64px">31</div>
<pre style="top:149.64px">    PP.resourceManager.setRootResourcesFolder(<span class="s">"resources/"</span>);</pre>
<div class="ln" style="top:166.10px">32</div>
<pre style="top:166.10px">    <span class="c">// Установим языковые настройки для ресурсов</span></pre>
<div class="ln" style="top:182.56px">33</div>
<pre style="top:182.56px">    PP.setCurrentCulture(PP.Cultures.ru);</pre>
<div class="ln" style="top:199.02px">34</div>
<pre style="top:199.02px">    <span class="c">// Создаём соединение с репозиторием</span></pre>
<div class="ln" style="top:215.48px">35</div>
<pre style="top:215.48px">    <span class="k">var</span> metabase = <span class="k">new</span> PP.Mb.Metabase({</pre>
<div class="ln" style="top:231.94px">36</div>
<pre style="top:231.94px">        PPServiceUrl: <span class="s">"PPService.axd"</span>,</pre>
<div class="ln" style="top:248.40px">37</div>
<pre style="top:248.40px">        Id: <span class="s">"PPREPOSITORY"</span>,</pre>
<div class="ln" style="top:264.86px">38</div>
<pre style="top:264.86px">        UserCreds: {</pre>
<div class="ln" style="top:281.32px">39</div>
<pre style="top:281.32px">            UserName: <span class="s">"User"</span>,</pre>
<div class="ln" style="top:297.78px">40</div>
<pre style="top:297.78px">            Password: <span class="s">"Password"</span></pre>
<div class="ln" style="top:314.24px">41</div>
<pre style="top:314.24px">        }</pre>
<div class="ln" style="top:330.70px">42</div>
<pre style="top:330.70px">    });</pre>
<div class="ln" style="top:347.16px">43</div>
<pre style="top:347.16px">    <span class="c">// Открываем соединение с репозиторием</span></pre>
<div class="ln" style="top:363.62px">44</div>
<pre style="top:363.62px">    metabase.open();</pre>
<div class="ln" style="top:380.08px">45</div>
<pre style="top:380.08px">    <span class="c">// Создаём сервис для работы с экспресс-отчётами</span></pre>
<div class="ln" style="top:396.54px">46</div>
<pre style="top:396.54px">    eaxMdService = <span class="k">new</span> PP.Exp.EaxMdService({</pre>
<div class="ln" style="top:413.00px">47</div>
<pre style="top:413.00px">        Metabase: metabase</pre>
<div class="ln" style="top:429.46px">48</div>
<pre style="top:429.46px">    });</pre>
<div class="ln" style="top:445.92px">49</div>
<pre style="top:445.92px">     <span class="c">// Откроем документ с ключом 67035</span></pre>
<div class="ln" style="top:462.38px">50</div>
<pre style="top:462.38px">    eaxAnalyzer = eaxMdService.editDocument(65760);</pre>
<div class="ln" style="top:478.84px">51</div>
<div class="ln" style="top:495.30px">52</div>
<pre style="top:495.30px">     <span class="c">/**/</span> <span class="k">var</span> moduleObject = <span class="k">new</span> PP.App.EaxModuleObject({</pre>
<div class="ln" style="top:511.76px">53</div>
<pre style="top:511.76px">         <span class="s">"Source"</span>: eaxAnalyzer,</pre>
<div class="ln" style="top:528.22px">54</div>
<pre style="top:528.22px">         <span class="s">"Service"</span>: eaxMdService,</pre>
<div class="ln" style="top:544.68px">55</div>
<pre style="top:544.68px">         <span class="s">"ParentNode"</span>: document.body,</pre>
<div class="ln" style="top:561.14px">56</div>
<pre style="top:561.14px">         <span class="s">"ImagePath"</span>: IMAGE_PATH</pre>
<div class="ln" style="top:577.60px">57</div>
<pre style="top:577.60px">     });</pre>
<div class="ln" style="top:594.06px">58</div>
<pre style="top:594.06px">     expressBox = moduleObject.getReportBox();</pre>
<div class="ln" style="top:610.52px">59</div>
<pre style="top:610.52px">     window.onresize();</pre>
<div class="cb" style="top:36.6px"></div>
<div class="cb" style="top:102.5px"></div>
<div class="cb" style="top:118.9px"></div>
<div class="cb" style="top:217.7px"></div>
<div class="cb" style="top:267.1px"></div>
<div class="cb" style="top:398.7px"></div>
<div class="cb" style="top:497.5px"></div>
<div class="tick" style="top:15px"></div>
<div class="tick" style="top:32px"></div>
<div class="tick" style="top:147px"></div>
<div class="tick" style="top:329px"></div>
<div class="tick" style="top:345px"></div>
<div class="tick" style="top:444px"></div>
<div class="tick" style="top:593px"></div>
<div class="ym" style="top:247.1px;height:16.5px"></div>
<div class="ym" style="top:280.0px;height:33.0px"></div>
</div>
<div class="abs" style="left:552px;top:23px;width:17px;height:636px;background:#e8e8ec"></div>
<div class="abs" style="left:569px;top:23px;width:1px;height:636px;background:#8e9bbc"></div>
<div class="abs" style="left:552px;top:23px;width:17px;height:17px;background:#e9eefb;border:1px solid #b4bede"></div>
<svg class="abs" style="left:554px;top:24px" width="13" height="15" viewBox="0 0 13 15"><path d="M1 6.5H12M1 8.5H12M6.5 2V13" stroke="#1e2a44" stroke-width="1" fill="none"/><path d="M4.3 3.8L6.5 1.2L8.7 3.8ZM4.3 11.2L6.5 13.8L8.7 11.2Z" fill="#1e2a44"/></svg>
<div class="abs" style="left:556px;top:46px;width:0;height:0;border-left:4.5px solid transparent;border-right:4.5px solid transparent;border-bottom:5px solid #868999"></div>
<div class="abs" style="left:556px;top:630px;width:0;height:0;border-left:4.5px solid transparent;border-right:4.5px solid transparent;border-top:5px solid #868999"></div>
<div class="abs" style="left:556.5px;top:144px;width:8.5px;height:153px;background:#c2c3c9"></div>
<div class="abs" style="left:552.5px;top:204px;width:4.5px;height:20px;background:#ffee62"></div>
<div class="abs" style="left:552px;top:335px;width:18px;height:2px;background:#0000cd"></div>
<div class="abs" style="left:32px;top:642px;width:520px;height:17px;background:#e8e8ec"></div>
<div class="abs" style="left:32px;top:642px;width:61px;height:17px;background:#fff;border:1px solid #c9d0e6"></div>
<div class="vt" style="left:34px;top:643.5px;color:#000;font-size:11.4px">97 %</div>
<div class="arr" style="left:84px;top:650px;border-top-color:#222"></div>
<div class="abs" style="left:99px;top:646px;width:0;height:0;border-top:4.5px solid transparent;border-bottom:4.5px solid transparent;border-right:5px solid #868999"></div>
<div class="abs" style="left:541px;top:646px;width:0;height:0;border-top:4.5px solid transparent;border-bottom:4.5px solid transparent;border-left:5px solid #868999"></div>
<div class="abs" style="left:110px;top:646.3px;width:176px;height:8.5px;background:#c2c3c9"></div>
<div class="vt" style="left:32.5px;top:666.6px;font-size:12px;letter-spacing:-0.45px">Find Results 1</div>
<div class="vt" style="left:116.2px;top:666.6px;font-size:12px;letter-spacing:0.3px">Output</div>
<div class="abs" style="left:32px;top:685px;width:72px;height:6px;background:#4d6082"></div>
<div class="abs" style="left:116px;top:685px;width:38px;height:6px;background:#4d6082"></div>
<div class="abs" style="left:1px;top:691px;width:571px;height:3px;background:#007acc"></div>
<div class="abs" style="left:0;top:0;width:1px;height:695px;background:#1b2438"></div>
</div>
<div id="topb"></div><div id="botb"></div>
</body></html>
